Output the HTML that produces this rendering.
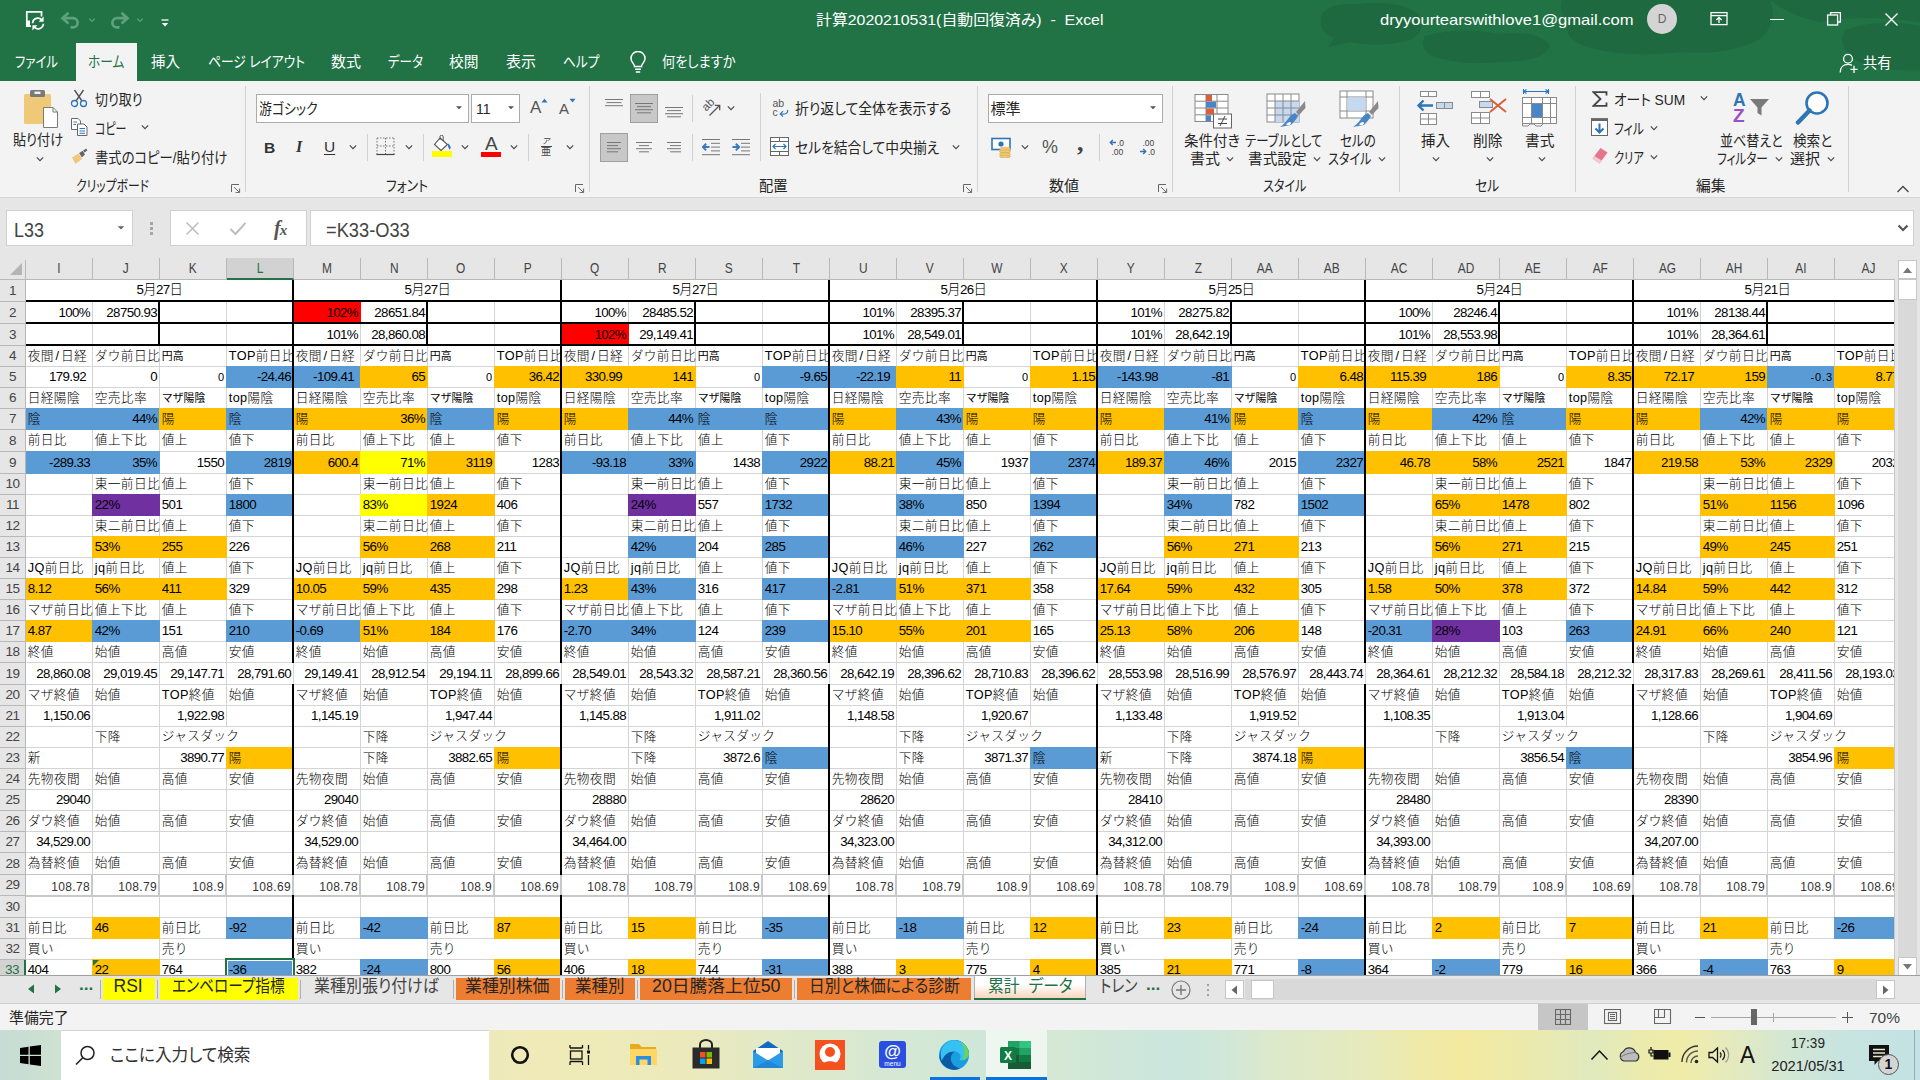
<!DOCTYPE html>
<html lang="ja"><head><meta charset="utf-8"><title>Excel</title>
<style>
html,body{margin:0;padding:0}
body{width:1920px;height:1080px;position:relative;overflow:hidden;background:#fff;font-family:"Liberation Sans","Noto Sans CJK JP",sans-serif;font-feature-settings:"palt"}
.b{position:absolute;display:block}
.t{position:absolute;white-space:nowrap;display:inline-block}
#g{position:absolute;left:0;top:258px;width:1895px;height:718px;overflow:hidden;background:#fff;font-feature-settings:normal}
.c{position:absolute;box-sizing:border-box;overflow:hidden;white-space:nowrap;padding:0 3px 0 2.8px;font-size:12.7px;color:#000;text-align:left;font-weight:300;letter-spacing:.35px}
.r{text-align:right}.m{text-align:center}
.n{font-size:13.3px;letter-spacing:-0.6px}
.s{font-size:10.9px;font-weight:400;letter-spacing:0}
.sn{font-size:11px;letter-spacing:.9px;padding-right:2px}
.g{font-size:12px;color:#333;padding-top:2px}
.ov{overflow:visible;background:#fff;z-index:1}
.o{background:#ffc000}.bl{background:#5b9bd5}.p{background:#7030a0}.y{background:#ffff00}.rd{background:#ff0000}
.vl{position:absolute;top:22px;width:1px;height:696px;background:#d4d4d4}
.hl{position:absolute;left:26px;width:1868px;height:1px;background:#d4d4d4}
.k{position:absolute;background:#000}
.ch{position:absolute;top:0;height:21px;line-height:21px;text-align:center;font-size:14.5px;color:#444;border-right:1px solid #b8b8b8;box-sizing:border-box}
.rh{position:absolute;left:0;width:25px;text-align:center;font-size:13.5px;letter-spacing:-0.4px;color:#444;border-bottom:1px solid #b8b8b8;box-sizing:border-box}
.p6{padding-right:7px}
.sl{padding:0 1.6px}
.ch i{display:inline-block;font-style:normal;transform:scaleX(.82)}

</style></head>
<body>
<div class="b" style="left:0px;top:0px;width:1920px;height:81px;background:#217346;"></div>
<svg class="b" style="left:1300px;top:0px;" width="620" height="81" viewBox="0 0 620 81"><g fill="#1c6139" opacity="0.5">
<path d="M22 14 Q30 2 60 4 Q100 0 118 14 Q128 30 110 40 Q80 48 50 42 L28 47 L34 38 Q16 30 22 14 Z"/>
<path d="M125 36 Q160 26 200 34 Q240 30 250 46 Q244 62 200 62 Q160 66 132 56 Q118 46 125 36 Z"/>
<path d="M262 0 L470 0 Q478 20 462 38 Q430 56 380 52 Q330 58 290 48 Q262 40 268 22 Q258 10 262 0 Z"/>
<path d="M470 0 L620 0 L620 22 Q560 14 520 22 Q490 16 470 0 Z"/>
<path d="M545 30 Q580 18 620 26 L620 70 Q580 72 556 60 Q536 46 545 30 Z"/></g></svg>
<svg class="b" style="left:25px;top:10px;" width="22" height="21" viewBox="0 0 22 21"><g fill="none" stroke="#fff" stroke-width="1.7">
<path d="M16.500 6.500 V1.800 H1.800 V16.200 H6"/>
<path d="M7.600 13.200 A5.300 5.300 0 0 1 17.200 10.400"/><path d="M18.400 13.800 A5.300 5.300 0 0 1 8.800 16.600"/></g>
<rect x="1" y="10.500" width="4" height="6.500" fill="#fff"/>
<path d="M18.600 6.600 V11.800 H13.600 Z M7.400 20.400 V15.200 H12.400 Z" fill="#fff"/></svg>
<svg class="b" style="left:60px;top:11px;" width="22" height="18" viewBox="0 0 22 18"><path d="M8.500 1.800 L2.500 7.200 L8.500 12.600 M3.500 7.200 H13 A4.600 4.600 0 0 1 13 16.400 H10.500" fill="none" stroke="#5fa07d" stroke-width="2.700"/></svg>
<svg class="b" style="left:87px;top:16px;" width="10" height="8" viewBox="0 0 10 8"><path d="M2.2 2.6 L5 5.4 L7.8 2.6" fill="none" stroke="#5fa07d" stroke-width="1.3"/></svg>
<svg class="b" style="left:108px;top:11px;" width="22" height="18" viewBox="0 0 22 18"><path d="M13.500 1.800 L19.500 7.200 L13.500 12.600 M18.500 7.200 H9 A4.600 4.600 0 0 0 9 16.400 H11.500" fill="none" stroke="#5fa07d" stroke-width="2.700"/></svg>
<svg class="b" style="left:135px;top:16px;" width="10" height="8" viewBox="0 0 10 8"><path d="M2.2 2.6 L5 5.4 L7.8 2.6" fill="none" stroke="#5fa07d" stroke-width="1.3"/></svg>
<svg class="b" style="left:160px;top:18.5px;" width="10" height="9" viewBox="0 0 10 9"><path d="M1.5 1 H8.5" stroke="#fff" stroke-width="1.3"/><path d="M1.8 4 H8.2 L5 7.6 Z" fill="#fff"/></svg>
<span class="t" style="left:816px;top:8.5px;font-size:15px;line-height:22px;color:#fff;transform-origin:0 50%;transform:scaleX(1.059);">計算2020210531(自動回復済み)&nbsp; -&nbsp; Excel</span>
<span class="t" style="left:1380px;top:8.5px;font-size:15px;line-height:22px;color:#fff;transform-origin:0 50%;transform:scaleX(1.105);">dryyourtearswithlove1@gmail.com</span>
<div class="b" style="left:1647px;top:4px;width:30px;height:30px;background:#d4d4d4;border-radius:50%"></div>
<span class="t" style="left:1662px;top:10.0px;font-size:12px;line-height:18px;color:#666;transform:translateX(-50%);">D</span>
<svg class="b" style="left:1710px;top:11px;" width="18" height="15" viewBox="0 0 18 15"><g fill="none" stroke="#fff" stroke-width="1.3"><rect x="1" y="1.6" width="16" height="12"/><path d="M1 4.6 H17"/><path d="M9 12 V6.6 M6.4 9 L9 6.4 L11.6 9"/></g></svg>
<div class="b" style="left:1770px;top:19px;width:14px;height:1.4px;background:#fff;"></div>
<svg class="b" style="left:1826px;top:11px;" width="16" height="15" viewBox="0 0 16 15"><g fill="none" stroke="#fff" stroke-width="1.3"><rect x="1.6" y="4" width="10" height="10"/><path d="M4.6 4 V1.6 H14.4 V11 H11.6"/></g></svg>
<svg class="b" style="left:1884px;top:12px;" width="15" height="15" viewBox="0 0 15 15"><path d="M1.5 1.5 L13.5 13.5 M13.5 1.5 L1.5 13.5" stroke="#fff" stroke-width="1.4"/></svg>
<div class="b" style="left:76px;top:43px;width:61px;height:38px;background:#f3f3f3;"></div>
<span class="t" style="left:15px;top:50.5px;font-size:15px;line-height:22px;color:#fff;transform-origin:0 50%;transform:scaleX(0.8269);">ファイル</span>
<span class="t" style="left:87.5px;top:50.5px;font-size:15px;line-height:22px;color:#217346;transform-origin:0 50%;transform:scaleX(0.8488);">ホーム</span>
<span class="t" style="left:151px;top:50.5px;font-size:15px;line-height:22px;color:#fff;transform-origin:0 50%;transform:scaleX(0.9667);">挿入</span>
<span class="t" style="left:207.5px;top:50.5px;font-size:15px;line-height:22px;color:#fff;transform-origin:0 50%;transform:scaleX(0.8509);">ページ レイアウト</span>
<span class="t" style="left:331px;top:50.5px;font-size:15px;line-height:22px;color:#fff;transform-origin:0 50%;transform:scaleX(1);">数式</span>
<span class="t" style="left:387.5px;top:50.5px;font-size:15px;line-height:22px;color:#fff;transform-origin:0 50%;transform:scaleX(0.8333);">データ</span>
<span class="t" style="left:449px;top:50.5px;font-size:15px;line-height:22px;color:#fff;transform-origin:0 50%;transform:scaleX(0.9833);">校閲</span>
<span class="t" style="left:506px;top:50.5px;font-size:15px;line-height:22px;color:#fff;transform-origin:0 50%;transform:scaleX(1);">表示</span>
<span class="t" style="left:562.5px;top:50.5px;font-size:15px;line-height:22px;color:#fff;transform-origin:0 50%;transform:scaleX(0.8488);">ヘルプ</span>
<span class="t" style="left:662px;top:50.5px;font-size:15px;line-height:22px;color:#fff;transform-origin:0 50%;transform:scaleX(0.8795);">何をしますか</span>
<svg class="b" style="left:629px;top:51px;" width="18" height="23" viewBox="0 0 18 23"><g fill="none" stroke="#fff" stroke-width="1.5"><path d="M5.5 15.5 C5.5 12.5 2 11.5 2 7.5 A7 7 0 0 1 16 7.5 C16 11.5 12.5 12.5 12.5 15.5 Z"/><path d="M6 18.3 H12 M6.8 21 H11.2"/></g></svg>
<svg class="b" style="left:1839px;top:53px;" width="20" height="21" viewBox="0 0 20 21"><g fill="none" stroke="#fff" stroke-width="1.3"><circle cx="9" cy="5.8" r="4.4"/><path d="M1.2 19.5 C1.2 14 4.5 11.4 9 11.4 C10.6 11.4 12 11.8 13 12.4"/><path d="M15 12.8 V20 M11.4 16.4 H18.6"/></g></svg>
<span class="t" style="left:1862.5px;top:52.0px;font-size:15px;line-height:22px;color:#fff;transform-origin:0 50%;transform:scaleX(0.95);">共有</span>
<div class="b" style="left:0px;top:81px;width:1920px;height:116px;background:#f3f3f3;"></div>
<svg class="b" style="left:23px;top:89px;" width="36" height="40" viewBox="0 0 36 40"><rect x="1" y="5" width="27" height="30" rx="1.5" fill="#efc878"/>
<rect x="7" y="1" width="15" height="7" rx="1.5" fill="#7a7a7a"/><rect x="11.5" y="2.6" width="6" height="2.4" fill="#f3f3f3"/>
<path d="M20.5 18.5 H30 L34.5 23 V38.5 H20.5 Z" fill="#fff" stroke="#7a7a7a" stroke-width="1"/><path d="M30 18.5 V23 H34.5" fill="none" stroke="#7a7a7a" stroke-width="1"/></svg>
<span class="t" style="left:12.5px;top:129.0px;font-size:15px;line-height:22px;color:#262626;transform-origin:0 50%;transform:scaleX(0.8772);">貼り付け</span>
<svg class="b" style="left:35px;top:155px;" width="10" height="8" viewBox="0 0 10 8"><path d="M1.7999999999999998 2.4 L5 5.6 L8.2 2.4" fill="none" stroke="#444" stroke-width="1.1"/></svg>
<svg class="b" style="left:70px;top:89px;" width="18" height="19" viewBox="0 0 18 19"><path d="M4.5 1 L12 12 M13.5 1 L6 12" stroke="#555" stroke-width="1.4" fill="none"/>
<circle cx="4.5" cy="14.5" r="3" fill="none" stroke="#2e75b6" stroke-width="1.3"/><circle cx="13.5" cy="14.5" r="3" fill="none" stroke="#2e75b6" stroke-width="1.3"/></svg>
<span class="t" style="left:94.5px;top:88.5px;font-size:15px;line-height:22px;color:#262626;transform-origin:0 50%;transform:scaleX(0.8636);">切り取り</span>
<svg class="b" style="left:70px;top:117px;" width="19" height="20" viewBox="0 0 19 20"><path d="M1.5 1.5 H8 L10.5 4 V12.5 H1.5 Z" fill="#fff" stroke="#666" stroke-width="1"/>
<path d="M7.5 7 H14 L17 10 V18.5 H7.5 Z" fill="#fff" stroke="#666" stroke-width="1"/>
<path d="M3.5 5 H7 M3.5 7.5 H6 M9.5 11.5 H15 M9.5 14 H15 M9.5 16.3 H15" stroke="#2e75b6" stroke-width="1"/></svg>
<span class="t" style="left:94.5px;top:117.5px;font-size:15px;line-height:22px;color:#262626;transform-origin:0 50%;transform:scaleX(0.7326);">コピー</span>
<svg class="b" style="left:140px;top:123px;" width="10" height="8" viewBox="0 0 10 8"><path d="M1.7999999999999998 2.4 L5 5.6 L8.2 2.4" fill="none" stroke="#444" stroke-width="1.1"/></svg>
<svg class="b" style="left:71px;top:148px;" width="18" height="18" viewBox="0 0 18 18"><path d="M1 9.5 L7.5 5.5 L11 11 L4.5 16 Z" fill="#efc878"/><path d="M8.2 5 L11.8 2.8 L14 6.4 L10.8 9.6 Z" fill="#666"/><path d="M12.2 2.4 L15.2 0.6 L16.4 2.6 L13.4 4.4 Z" fill="#666"/></svg>
<span class="t" style="left:94.5px;top:146.5px;font-size:15px;line-height:22px;color:#262626;transform-origin:0 50%;transform:scaleX(0.8893);">書式のコピー/貼り付け</span>
<span class="t" style="left:75.5px;top:175.0px;font-size:15px;line-height:22px;color:#262626;transform-origin:0 50%;transform:scaleX(0.7903);">クリップボード</span>
<svg class="b" style="left:231px;top:184px;" width="10" height="9" viewBox="0 0 10 9"><path d="M0.5 8 V0.5 H8" fill="none" stroke="#666" stroke-width="1"/><path d="M3.2 3.2 L8.2 8.2 M8.6 4.6 V8.6 H4.6" fill="none" stroke="#666" stroke-width="1"/></svg>
<div class="b" style="left:245px;top:86px;width:1px;height:106px;background:#d2d2d2;"></div>
<div class="b" style="left:256px;top:94px;width:213px;height:29px;background:#fff;border:1px solid #ababab;box-sizing:border-box;"></div>
<span class="t" style="left:259px;top:98.0px;font-size:15px;line-height:22px;color:#262626;transform-origin:0 50%;transform:scaleX(0.8603);">游ゴシック</span>
<svg class="b" style="left:454px;top:105px;" width="10" height="6" viewBox="0 0 10 6"><path d="M2 1.2 L8 1.2 L5 4.2 Z" fill="#555"/></svg>
<div class="b" style="left:471px;top:94px;width:49px;height:29px;background:#fff;border:1px solid #ababab;box-sizing:border-box;"></div>
<span class="t" style="left:476px;top:98.0px;font-size:15px;line-height:22px;color:#262626;transform-origin:0 50%;transform:scaleX(0.9375);">11</span>
<svg class="b" style="left:506px;top:105px;" width="10" height="6" viewBox="0 0 10 6"><path d="M2 1.2 L8 1.2 L5 4.2 Z" fill="#555"/></svg>
<span class="t" style="left:530px;top:95.0px;font-size:17px;line-height:26px;color:#555;">A</span>
<svg class="b" style="left:541px;top:98px;" width="7" height="5" viewBox="0 0 7 5"><path d="M0.5 4.5 L3.5 0.8 L6.5 4.5 Z" fill="#2e75b6"/></svg>
<span class="t" style="left:559px;top:98.0px;font-size:15px;line-height:22px;color:#555;">A</span>
<svg class="b" style="left:569px;top:98px;" width="7" height="5" viewBox="0 0 7 5"><path d="M0.5 0.8 L3.5 4.5 L6.5 0.8 Z" fill="#2e75b6"/></svg>
<span class="t" style="left:264px;top:135.5px;font-size:15.5px;line-height:23px;color:#333;font-weight:bold;">B</span>
<span class="t" style="left:296px;top:135.0px;font-size:16px;line-height:24px;color:#333;font-family:'Liberation Serif',serif;font-style:italic;font-weight:bold">I</span>
<span class="t" style="left:324px;top:135.0px;font-size:15.5px;line-height:23px;color:#333;text-decoration:underline;text-underline-offset:2px">U</span>
<svg class="b" style="left:348px;top:143px;" width="10" height="8" viewBox="0 0 10 8"><path d="M1.7999999999999998 2.4 L5 5.6 L8.2 2.4" fill="none" stroke="#444" stroke-width="1.1"/></svg>
<div class="b" style="left:367px;top:134px;width:1px;height:27px;background:#d2d2d2;"></div>
<svg class="b" style="left:376px;top:137px;" width="20" height="19" viewBox="0 0 20 19"><g stroke="#777" stroke-width="1" stroke-dasharray="1.5 1.5" fill="none"><path d="M1 1 H18 M1 9 H18 M1 1 V18 M9.5 1 V18 M18 1 V18"/></g><path d="M0.5 17.5 H18.5" stroke="#444" stroke-width="1.2"/></svg>
<svg class="b" style="left:404px;top:143px;" width="10" height="8" viewBox="0 0 10 8"><path d="M1.7999999999999998 2.4 L5 5.6 L8.2 2.4" fill="none" stroke="#444" stroke-width="1.1"/></svg>
<div class="b" style="left:423px;top:134px;width:1px;height:27px;background:#d2d2d2;"></div>
<svg class="b" style="left:432px;top:135px;" width="21" height="17" viewBox="0 0 21 17"><path d="M8 3 L15.5 9.5 L9 15.5 L2.5 9.5 Z" fill="#fff" stroke="#555" stroke-width="1.1"/><path d="M8 5 V1.8 A1.6 1.6 0 0 1 11.2 1.8 V6" fill="none" stroke="#555" stroke-width="1"/><path d="M16 8.5 C18.5 10.5 19.5 13 17.8 14.5 C16 13 15.8 10.5 16 8.5 Z" fill="#2e75b6"/></svg>
<div class="b" style="left:432px;top:151px;width:20px;height:6px;background:#ffff00;"></div>
<svg class="b" style="left:460px;top:143px;" width="10" height="8" viewBox="0 0 10 8"><path d="M1.7999999999999998 2.4 L5 5.6 L8.2 2.4" fill="none" stroke="#444" stroke-width="1.1"/></svg>
<span class="t" style="left:484.5px;top:131.0px;font-size:17.5px;line-height:26px;color:#444;transform-origin:0 50%;transform:scaleX(1.083);">A</span>
<div class="b" style="left:481px;top:152px;width:20px;height:5px;background:#ff0000;"></div>
<svg class="b" style="left:509px;top:143px;" width="10" height="8" viewBox="0 0 10 8"><path d="M1.7999999999999998 2.4 L5 5.6 L8.2 2.4" fill="none" stroke="#444" stroke-width="1.1"/></svg>
<div class="b" style="left:528px;top:134px;width:1px;height:27px;background:#d2d2d2;"></div>
<span class="t" style="left:542px;top:135.5px;font-size:8px;line-height:12px;color:#444;font-style:italic">ア</span>
<span class="t" style="left:541px;top:143.5px;font-size:10px;line-height:15px;color:#444;">亜</span>
<div class="b" style="left:541px;top:146px;width:11px;height:1px;background:#444;"></div>
<svg class="b" style="left:565px;top:143px;" width="10" height="8" viewBox="0 0 10 8"><path d="M1.7999999999999998 2.4 L5 5.6 L8.2 2.4" fill="none" stroke="#444" stroke-width="1.1"/></svg>
<span class="t" style="left:386px;top:175.0px;font-size:15px;line-height:22px;color:#262626;transform-origin:0 50%;transform:scaleX(0.8571);">フォント</span>
<svg class="b" style="left:575px;top:184px;" width="10" height="9" viewBox="0 0 10 9"><path d="M0.5 8 V0.5 H8" fill="none" stroke="#666" stroke-width="1"/><path d="M3.2 3.2 L8.2 8.2 M8.6 4.6 V8.6 H4.6" fill="none" stroke="#666" stroke-width="1"/></svg>
<div class="b" style="left:589px;top:86px;width:1px;height:106px;background:#d2d2d2;"></div>
<svg class="b" style="left:605px;top:98.7px;" width="18" height="10" viewBox="0 0 18 10"><rect x="0.0" y="0.00" width="18" height="1" fill="#777"/><rect x="1.5" y="3.10" width="15" height="1" fill="#777"/><rect x="0.0" y="6.20" width="18" height="1" fill="#777"/></svg>
<div class="b" style="left:630px;top:94px;width:28px;height:29px;background:#c8c8c8;border:1px solid #9f9f9f;box-sizing:border-box;"></div>
<svg class="b" style="left:635px;top:102.5px;" width="18" height="13" viewBox="0 0 18 13"><rect x="0.0" y="0.00" width="18" height="1" fill="#777"/><rect x="2.0" y="3.10" width="14" height="1" fill="#777"/><rect x="0.0" y="6.20" width="18" height="1" fill="#777"/><rect x="2.0" y="9.30" width="14" height="1" fill="#777"/></svg>
<svg class="b" style="left:665px;top:107px;" width="18" height="13" viewBox="0 0 18 13"><rect x="0.0" y="0.00" width="18" height="1" fill="#777"/><rect x="2.0" y="3.10" width="14" height="1" fill="#777"/><rect x="0.0" y="6.20" width="18" height="1" fill="#777"/><rect x="2.0" y="9.30" width="14" height="1" fill="#777"/></svg>
<div class="b" style="left:692px;top:95px;width:1px;height:27px;background:#d2d2d2;"></div>
<svg class="b" style="left:699px;top:96px;" width="23" height="22" viewBox="0 0 23 22"><text x="0" y="0" font-size="11.500" fill="#555" transform="translate(7.300 15.800) rotate(-45)" font-family="Liberation Sans">ab</text><path d="M10.500 19.500 L20.500 9.500 M15.800 9.300 H20.700 V14.200" fill="none" stroke="#555" stroke-width="1.300"/></svg>
<svg class="b" style="left:726px;top:104px;" width="10" height="8" viewBox="0 0 10 8"><path d="M1.7999999999999998 2.4 L5 5.6 L8.2 2.4" fill="none" stroke="#444" stroke-width="1.1"/></svg>
<div class="b" style="left:760px;top:93px;width:1px;height:68px;background:#d2d2d2;"></div>
<svg class="b" style="left:772px;top:98px;" width="18" height="20" viewBox="0 0 18 20"><text x="0.500" y="9" font-size="10.500" fill="#555" font-family="Liberation Sans">ab</text><text x="0.500" y="18" font-size="10.500" fill="#555" font-family="Liberation Sans">c</text><path d="M15.500 12 C16.500 15.500 13 16.500 8.500 16 M11 13.200 L8.200 16 L11 18.600" fill="none" stroke="#3a7abf" stroke-width="1.200"/></svg>
<span class="t" style="left:794.5px;top:98.0px;font-size:15px;line-height:22px;color:#262626;transform-origin:0 50%;transform:scaleX(0.9231);">折り返して全体を表示する</span>
<div class="b" style="left:600px;top:133px;width:28px;height:29px;background:#c8c8c8;border:1px solid #9f9f9f;box-sizing:border-box;"></div>
<svg class="b" style="left:607px;top:141.7px;" width="14" height="13" viewBox="0 0 14 13"><rect x="0" y="0.00" width="14" height="1" fill="#777"/><rect x="0" y="3.10" width="11" height="1" fill="#777"/><rect x="0" y="6.20" width="14" height="1" fill="#777"/><rect x="0" y="9.30" width="11" height="1" fill="#777"/></svg>
<svg class="b" style="left:636px;top:141.7px;" width="16" height="13" viewBox="0 0 16 13"><rect x="0.0" y="0.00" width="16" height="1" fill="#777"/><rect x="3.0" y="3.10" width="10" height="1" fill="#777"/><rect x="0.0" y="6.20" width="16" height="1" fill="#777"/><rect x="3.0" y="9.30" width="10" height="1" fill="#777"/></svg>
<svg class="b" style="left:667px;top:141.7px;" width="14" height="13" viewBox="0 0 14 13"><rect x="0" y="0.00" width="14" height="1" fill="#777"/><rect x="3" y="3.10" width="11" height="1" fill="#777"/><rect x="0" y="6.20" width="14" height="1" fill="#777"/><rect x="3" y="9.30" width="11" height="1" fill="#777"/></svg>
<div class="b" style="left:692px;top:134px;width:1px;height:27px;background:#d2d2d2;"></div>
<svg class="b" style="left:702px;top:138.7px;" width="19" height="17" viewBox="0 0 19 17"><path d="M0 0.5 H18 M9 4.300 H18 M9 8.100 H18 M9 11.900 H18 M0 15.700 H18" stroke="#777" stroke-width="1"/><path d="M7.500 8.100 H1 M4.200 4.800 L0.900 8.100 L4.200 11.400" fill="none" stroke="#3a7abf" stroke-width="2"/></svg>
<svg class="b" style="left:732px;top:138.7px;" width="19" height="17" viewBox="0 0 19 17"><path d="M0 0.5 H18 M9 4.300 H18 M9 8.100 H18 M9 11.900 H18 M0 15.700 H18" stroke="#777" stroke-width="1"/><path d="M0.500 8.100 H7 M3.800 4.800 L7.100 8.100 L3.800 11.400" fill="none" stroke="#3a7abf" stroke-width="2"/></svg>
<svg class="b" style="left:770px;top:137px;" width="19" height="19" viewBox="0 0 19 19"><g fill="#fff" stroke="#666" stroke-width="1"><rect x="0.5" y="0.5" width="18" height="18"/><path d="M0.5 4.5 H18.5 M0.5 14.5 H18.5 M9.500 0.5 V4.5 M9.500 14.5 V18.5"/></g><path d="M3 9.5 H16 M5.5 7 L3 9.5 L5.5 12 M13.5 7 L16 9.5 L13.5 12" fill="none" stroke="#2e75b6" stroke-width="1.2"/></svg>
<span class="t" style="left:794.5px;top:137.0px;font-size:15px;line-height:22px;color:#262626;transform-origin:0 50%;transform:scaleX(0.9204);">セルを結合して中央揃え</span>
<svg class="b" style="left:951px;top:143px;" width="10" height="8" viewBox="0 0 10 8"><path d="M1.7999999999999998 2.4 L5 5.6 L8.2 2.4" fill="none" stroke="#444" stroke-width="1.1"/></svg>
<span class="t" style="left:759px;top:175.0px;font-size:15px;line-height:22px;color:#262626;transform-origin:0 50%;transform:scaleX(0.95);">配置</span>
<svg class="b" style="left:963px;top:184px;" width="10" height="9" viewBox="0 0 10 9"><path d="M0.5 8 V0.5 H8" fill="none" stroke="#666" stroke-width="1"/><path d="M3.2 3.2 L8.2 8.2 M8.6 4.6 V8.6 H4.6" fill="none" stroke="#666" stroke-width="1"/></svg>
<div class="b" style="left:977px;top:86px;width:1px;height:106px;background:#d2d2d2;"></div>
<div class="b" style="left:988px;top:94px;width:175px;height:29px;background:#fff;border:1px solid #ababab;box-sizing:border-box;"></div>
<span class="t" style="left:990.5px;top:98.0px;font-size:15px;line-height:22px;color:#262626;transform-origin:0 50%;transform:scaleX(1);">標準</span>
<svg class="b" style="left:1148px;top:105px;" width="10" height="6" viewBox="0 0 10 6"><path d="M2 1.2 L8 1.2 L5 4.2 Z" fill="#555"/></svg>
<svg class="b" style="left:991px;top:137px;" width="22" height="21" viewBox="0 0 22 21"><rect x="1" y="1.5" width="18" height="11" fill="#fff" stroke="#2e75b6" stroke-width="1.6"/><circle cx="10" cy="7" r="2.6" fill="#2e75b6"/>
<g fill="#efc878" stroke="#d9a441" stroke-width="0.6"><ellipse cx="14" cy="12" rx="5.5" ry="1.8"/><ellipse cx="14" cy="14.6" rx="5.5" ry="1.8"/><ellipse cx="14" cy="17.2" rx="5.5" ry="1.8"/><ellipse cx="14" cy="19.4" rx="5.5" ry="1.4"/></g></svg>
<svg class="b" style="left:1020px;top:143px;" width="10" height="8" viewBox="0 0 10 8"><path d="M1.7999999999999998 2.4 L5 5.6 L8.2 2.4" fill="none" stroke="#444" stroke-width="1.1"/></svg>
<span class="t" style="left:1042px;top:133.0px;font-size:19px;line-height:28px;color:#555;transform-origin:0 50%;transform:scaleX(0.9412);">%</span>
<span class="t" style="left:1077px;top:122.5px;font-size:26px;line-height:39px;color:#444;font-family:'Liberation Serif',serif;font-weight:bold">,</span>
<div class="b" style="left:1099px;top:134px;width:1px;height:27px;background:#d2d2d2;"></div>
<svg class="b" style="left:1109px;top:138px;" width="18" height="19" viewBox="0 0 18 19"><text x="8" y="7.5" font-size="8.5" fill="#444" font-family="Liberation Sans">.0</text><text x="2.5" y="17" font-size="8.5" fill="#444" font-family="Liberation Sans">.00</text><path d="M7 4.5 H1.5 M3.8 2 L1.3 4.5 L3.8 7" fill="none" stroke="#2e75b6" stroke-width="1.4"/></svg>
<svg class="b" style="left:1139px;top:138px;" width="18" height="19" viewBox="0 0 18 19"><text x="3.5" y="7.5" font-size="8.5" fill="#444" font-family="Liberation Sans">.00</text><text x="9" y="17" font-size="8.5" fill="#444" font-family="Liberation Sans">.0</text><path d="M1 13.5 H6.5 M4.2 11 L6.7 13.5 L4.2 16" fill="none" stroke="#2e75b6" stroke-width="1.4"/></svg>
<span class="t" style="left:1049px;top:175.0px;font-size:15px;line-height:22px;color:#262626;transform-origin:0 50%;transform:scaleX(1);">数値</span>
<svg class="b" style="left:1158px;top:184px;" width="10" height="9" viewBox="0 0 10 9"><path d="M0.5 8 V0.5 H8" fill="none" stroke="#666" stroke-width="1"/><path d="M3.2 3.2 L8.2 8.2 M8.6 4.6 V8.6 H4.6" fill="none" stroke="#666" stroke-width="1"/></svg>
<div class="b" style="left:1172px;top:86px;width:1px;height:106px;background:#d2d2d2;"></div>
<svg class="b" style="left:1194px;top:93px;" width="40" height="36" viewBox="0 0 40 36"><rect x="1" y="1.5" width="33" height="27" fill="#fff" stroke="#8a8a8a" stroke-width="1"/><path d="M1 8.2 H34 M1 15 H34 M1 21.8 H34 M12 1.5 V28.5 M23 1.5 V28.5" stroke="#8a8a8a" stroke-width="1"/>
<rect x="12" y="2" width="6" height="6" fill="#d9603b"/><rect x="12" y="8.7" width="10" height="6" fill="#4a86c5"/><rect x="12" y="15.5" width="8" height="6" fill="#d9603b"/><rect x="12" y="22.3" width="5" height="6" fill="#4a86c5"/>
<rect x="19.5" y="21" width="18" height="14" fill="#fff" stroke="#666" stroke-width="1"/><path d="M24 30.5 H33 M24 26 H33 M31 23 L26 33" stroke="#444" stroke-width="1"/></svg>
<span class="t" style="left:1184px;top:129.5px;font-size:15px;line-height:22px;color:#262626;transform-origin:0 50%;transform:scaleX(0.9655);">条件付き</span>
<span class="t" style="left:1190px;top:148.0px;font-size:15px;line-height:22px;color:#262626;transform-origin:0 50%;transform:scaleX(1);">書式</span>
<svg class="b" style="left:1225px;top:155px;" width="10" height="8" viewBox="0 0 10 8"><path d="M1.7999999999999998 2.4 L5 5.6 L8.2 2.4" fill="none" stroke="#444" stroke-width="1.1"/></svg>
<svg class="b" style="left:1266px;top:93px;" width="34" height="32" viewBox="0 0 34 32"><rect x="1" y="1" width="32" height="28" fill="#fff" stroke="#8a8a8a"/><rect x="9" y="8" width="24" height="21" fill="#c5d9f1"/><path d="M1 8 H33 M1 15 H33 M1 22 H33 M9 1 V29 M17 1 V29 M25 1 V29" stroke="#8a8a8a" stroke-width="1"/></svg>
<svg class="b" style="left:1278px;top:100px;" width="28" height="28" viewBox="0 0 28 28"><path d="M27 1 L18 12 L21 15 L27.5 8 Z" fill="#8a8a8a"/><path d="M17 13 L20 16 C18 20 15 23 13 25 L2 27 C6 24 8 22 10 19 C12 16 14 14 17 13 Z" fill="#4a86c5"/><path d="M8 24.5 C10 22 12.5 21 13 23.5 C12 25.5 10 25.8 8 24.5 Z" fill="#fff"/></svg>
<span class="t" style="left:1245px;top:129.5px;font-size:15px;line-height:22px;color:#262626;transform-origin:0 50%;transform:scaleX(0.8245);">テーブルとして</span>
<span class="t" style="left:1247.5px;top:148.0px;font-size:15px;line-height:22px;color:#262626;transform-origin:0 50%;transform:scaleX(0.975);">書式設定</span>
<svg class="b" style="left:1312px;top:155px;" width="10" height="8" viewBox="0 0 10 8"><path d="M1.7999999999999998 2.4 L5 5.6 L8.2 2.4" fill="none" stroke="#444" stroke-width="1.1"/></svg>
<svg class="b" style="left:1339px;top:90px;" width="36" height="32" viewBox="0 0 36 32"><rect x="1" y="1" width="33" height="27" fill="#fff" stroke="#8a8a8a"/><path d="M1 7 H34 M1 21 H34 M8 1 V28 M27 1 V28" stroke="#8a8a8a" stroke-width="1"/><rect x="8.500" y="7.5" width="18" height="13" fill="#c5d9f1"/></svg>
<svg class="b" style="left:1351px;top:100px;" width="28" height="28" viewBox="0 0 28 28"><path d="M27 1 L18 12 L21 15 L27.5 8 Z" fill="#8a8a8a"/><path d="M17 13 L20 16 C18 20 15 23 13 25 L2 27 C6 24 8 22 10 19 C12 16 14 14 17 13 Z" fill="#4a86c5"/><path d="M8 24.5 C10 22 12.5 21 13 23.5 C12 25.5 10 25.8 8 24.5 Z" fill="#fff"/></svg>
<span class="t" style="left:1340px;top:129.5px;font-size:15px;line-height:22px;color:#262626;transform-origin:0 50%;transform:scaleX(0.8372);">セルの</span>
<span class="t" style="left:1327.5px;top:148.0px;font-size:15px;line-height:22px;color:#262626;transform-origin:0 50%;transform:scaleX(0.8056);">スタイル</span>
<svg class="b" style="left:1377px;top:155px;" width="10" height="8" viewBox="0 0 10 8"><path d="M1.7999999999999998 2.4 L5 5.6 L8.2 2.4" fill="none" stroke="#444" stroke-width="1.1"/></svg>
<span class="t" style="left:1262.5px;top:175.0px;font-size:15px;line-height:22px;color:#262626;transform-origin:0 50%;transform:scaleX(0.8056);">スタイル</span>
<div class="b" style="left:1399px;top:86px;width:1px;height:106px;background:#d2d2d2;"></div>
<svg class="b" style="left:1416px;top:91px;" width="38" height="35" viewBox="0 0 38 35"><g fill="#fff" stroke="#8a8a8a" stroke-width="1"><rect x="4.500" y="0.5" width="16" height="5"/><rect x="4.5" y="22.5" width="16" height="11"/><path d="M4.5 28 H20.5 M12.5 22.5 V33.5 M12.5 .5 V5.5"/></g>
<rect x="20.500" y="11.5" width="16" height="6" fill="#c5d9f1" stroke="#8a8a8a"/><path d="M28.5 11.5 V17.5" stroke="#8a8a8a"/>
<path d="M17 14.500 H2.5 M7.5 9.5 L2.5 14.5 L7.5 19.5" fill="none" stroke="#2e75b6" stroke-width="2.4"/></svg>
<span class="t" style="left:1421px;top:129.5px;font-size:15px;line-height:22px;color:#262626;transform-origin:0 50%;transform:scaleX(0.9667);">挿入</span>
<svg class="b" style="left:1431px;top:155px;" width="10" height="8" viewBox="0 0 10 8"><path d="M1.7999999999999998 2.4 L5 5.6 L8.2 2.4" fill="none" stroke="#444" stroke-width="1.1"/></svg>
<svg class="b" style="left:1471px;top:91px;" width="38" height="35" viewBox="0 0 38 35"><g fill="#fff" stroke="#8a8a8a" stroke-width="1"><rect x="0.500" y="0.5" width="18" height="6"/><rect x="0.5" y="21.5" width="18" height="11"/><path d="M0.5 27 H18.5 M9.5 21.5 V32.500 M9.5 .5 V6.5"/></g>
<rect x="8.500" y="10.5" width="13" height="6" fill="#c5d9f1" stroke="#8a8a8a"/>
<path d="M19 8 L35 21 M35 8 L19 21" stroke="#d9603b" stroke-width="2"/></svg>
<span class="t" style="left:1473px;top:129.5px;font-size:15px;line-height:22px;color:#262626;transform-origin:0 50%;transform:scaleX(0.9833);">削除</span>
<svg class="b" style="left:1485px;top:155px;" width="10" height="8" viewBox="0 0 10 8"><path d="M1.7999999999999998 2.4 L5 5.6 L8.2 2.4" fill="none" stroke="#444" stroke-width="1.1"/></svg>
<svg class="b" style="left:1522px;top:89px;" width="36" height="38" viewBox="0 0 36 38"><path d="M1.5 2.500 H26.5 M1.5 0 V5 M26.500 0 V5 M4.5 0.5 L1.5 2.500 L4.5 4.5 M23.5 .5 L26.5 2.5 L23.500 4.500" fill="none" stroke="#2e75b6" stroke-width="1.1"/>
<rect x="0.500" y="8.5" width="34" height="26" fill="#fff" stroke="#8a8a8a"/><path d="M.5 14.500 H34.5 M.5 28.5 H34.5 M9.5 8.5 V34.500 M20.5 8.5 V34.5 M28.5 8.5 V34.5" stroke="#8a8a8a"/><rect x="10" y="15" width="10" height="13" fill="#4a86c5"/>
<path d="M0.5 34.5 V37 L6 37 L8 35 H12 L14 37 H19 L21 35" fill="none" stroke="#8a8a8a"/></svg>
<span class="t" style="left:1525px;top:129.5px;font-size:15px;line-height:22px;color:#262626;transform-origin:0 50%;transform:scaleX(0.9833);">書式</span>
<svg class="b" style="left:1537px;top:155px;" width="10" height="8" viewBox="0 0 10 8"><path d="M1.7999999999999998 2.4 L5 5.6 L8.2 2.4" fill="none" stroke="#444" stroke-width="1.1"/></svg>
<span class="t" style="left:1475px;top:175.0px;font-size:15px;line-height:22px;color:#262626;transform-origin:0 50%;transform:scaleX(0.8571);">セル</span>
<div class="b" style="left:1575px;top:86px;width:1px;height:106px;background:#d2d2d2;"></div>
<svg class="b" style="left:1592px;top:91px;" width="16" height="16" viewBox="0 0 16 16"><path d="M14.500 4.500 V1.2 H1.500 L8.5 8 L1.5 14.800 H14.5 V11.5" fill="none" stroke="#444" stroke-width="1.8"/></svg>
<span class="t" style="left:1614px;top:88.5px;font-size:15px;line-height:22px;color:#262626;transform-origin:0 50%;transform:scaleX(0.9167);">オート SUM</span>
<svg class="b" style="left:1699px;top:94px;" width="10" height="8" viewBox="0 0 10 8"><path d="M1.7999999999999998 2.4 L5 5.6 L8.2 2.4" fill="none" stroke="#444" stroke-width="1.1"/></svg>
<svg class="b" style="left:1591px;top:118px;" width="18" height="18" viewBox="0 0 18 18"><rect x="0.5" y="2.5" width="16" height="15" fill="#fff" stroke="#666"/><path d="M0 1.2 H17" stroke="#666" stroke-width="2.200"/><path d="M8.5 5.500 V14 M4.500 10.500 L8.500 14.500 L12.5 10.5" fill="none" stroke="#2e75b6" stroke-width="2"/></svg>
<span class="t" style="left:1614px;top:117.5px;font-size:15px;line-height:22px;color:#262626;transform-origin:0 50%;transform:scaleX(0.7895);">フィル</span>
<svg class="b" style="left:1649px;top:124px;" width="10" height="8" viewBox="0 0 10 8"><path d="M1.7999999999999998 2.4 L5 5.6 L8.2 2.4" fill="none" stroke="#444" stroke-width="1.1"/></svg>
<svg class="b" style="left:1591px;top:147px;" width="18" height="18" viewBox="0 0 18 18"><path d="M9.500 1 L16.500 5.500 L8.500 16.500 L1.5 11.500 Z" fill="#e8748c"/><path d="M3.500 9 L1.5 11.5 L8.500 16.5 L10.5 13.500 Z" fill="#f7c9d2"/></svg>
<span class="t" style="left:1614px;top:146.5px;font-size:15px;line-height:22px;color:#262626;transform-origin:0 50%;transform:scaleX(0.75);">クリア</span>
<svg class="b" style="left:1649px;top:153px;" width="10" height="8" viewBox="0 0 10 8"><path d="M1.7999999999999998 2.4 L5 5.6 L8.2 2.4" fill="none" stroke="#444" stroke-width="1.1"/></svg>
<span class="t" style="left:1733px;top:87.0px;font-size:17.5px;line-height:26px;color:#2e75b6;font-weight:bold;transform-origin:0 50%;transform:scaleX(1);">A</span>
<span class="t" style="left:1733px;top:103.0px;font-size:17.5px;line-height:26px;color:#9b4fc4;font-weight:bold;transform-origin:0 50%;transform:scaleX(1.091);">Z</span>
<svg class="b" style="left:1749px;top:98px;" width="21" height="19" viewBox="0 0 21 19"><path d="M1 1 H20 L12.500 9.500 V17.500 L8.500 15 V9.500 Z" fill="#7a7a7a"/></svg>
<span class="t" style="left:1719.5px;top:129.5px;font-size:15px;line-height:22px;color:#262626;transform-origin:0 50%;transform:scaleX(0.8681);">並べ替えと</span>
<span class="t" style="left:1717px;top:148.0px;font-size:15px;line-height:22px;color:#262626;transform-origin:0 50%;transform:scaleX(0.7727);">フィルター</span>
<svg class="b" style="left:1774px;top:155px;" width="10" height="8" viewBox="0 0 10 8"><path d="M1.7999999999999998 2.4 L5 5.6 L8.2 2.4" fill="none" stroke="#444" stroke-width="1.1"/></svg>
<svg class="b" style="left:1795px;top:90px;" width="36" height="36" viewBox="0 0 36 36"><circle cx="22" cy="13" r="10.500" fill="#fff" stroke="#2e75b6" stroke-width="2.600"/><path d="M14.500 20.500 L3 32.500" stroke="#2e75b6" stroke-width="4.500" stroke-linecap="round"/></svg>
<span class="t" style="left:1793px;top:129.5px;font-size:15px;line-height:22px;color:#262626;transform-origin:0 50%;transform:scaleX(0.907);">検索と</span>
<span class="t" style="left:1790px;top:148.0px;font-size:15px;line-height:22px;color:#262626;transform-origin:0 50%;transform:scaleX(1);">選択</span>
<svg class="b" style="left:1826px;top:155px;" width="10" height="8" viewBox="0 0 10 8"><path d="M1.7999999999999998 2.4 L5 5.6 L8.2 2.4" fill="none" stroke="#444" stroke-width="1.1"/></svg>
<span class="t" style="left:1695.5px;top:175.0px;font-size:15px;line-height:22px;color:#262626;transform-origin:0 50%;transform:scaleX(0.9833);">編集</span>
<div class="b" style="left:1848px;top:86px;width:1px;height:106px;background:#d2d2d2;"></div>
<svg class="b" style="left:1896px;top:184px;" width="14" height="10" viewBox="0 0 14 10"><path d="M1.5 8 L7 2.500 L12.500 8" fill="none" stroke="#444" stroke-width="1.300"/></svg>
<div class="b" style="left:0px;top:197px;width:1920px;height:1px;background:#d6d6d6;"></div>
<div class="b" style="left:0px;top:198px;width:1920px;height:60px;background:#e6e6e6;"></div>
<div class="b" style="left:6px;top:210px;width:127px;height:36px;background:#fff;border:1px solid #d0d0d0;box-sizing:border-box;"></div>
<span class="t" style="left:14px;top:215.0px;font-size:20px;line-height:30px;color:#444;transform-origin:0 50%;transform:scaleX(0.8939);">L33</span>
<svg class="b" style="left:116px;top:225px;" width="10" height="6" viewBox="0 0 10 6"><path d="M1.6 1.2 L8.4 1.2 L5 4.6 Z" fill="#666"/></svg>
<div class="b" style="left:150px;top:221.5px;width:3px;height:3px;background:#a6a6a6;"></div>
<div class="b" style="left:150px;top:226.5px;width:3px;height:3px;background:#a6a6a6;"></div>
<div class="b" style="left:150px;top:231.5px;width:3px;height:3px;background:#a6a6a6;"></div>
<div class="b" style="left:170px;top:210px;width:137px;height:36px;background:#fff;border:1px solid #d0d0d0;box-sizing:border-box;"></div>
<svg class="b" style="left:185px;top:221px;" width="15" height="15" viewBox="0 0 15 15"><path d="M1.5 1.5 L13.5 13.5 M13.5 1.5 L1.5 13.5" stroke="#bdbdbd" stroke-width="1.5"/></svg>
<svg class="b" style="left:229px;top:221px;" width="18" height="15" viewBox="0 0 18 15"><path d="M1.5 8 L6.5 13 L16.5 1.8" stroke="#bdbdbd" stroke-width="2" fill="none"/></svg>
<span class="t" style="left:274px;top:213.0px;font-size:20px;line-height:30px;color:#555;font-family:'Liberation Serif',serif;font-weight:bold;letter-spacing:-1px"><i>f</i><i style="font-size:15px">x</i></span>
<div class="b" style="left:310px;top:210px;width:1604px;height:36px;background:#fff;border:1px solid #d0d0d0;box-sizing:border-box;"></div>
<span class="t" style="left:326px;top:214.5px;font-size:20px;line-height:30px;color:#444;transform-origin:0 50%;transform:scaleX(0.913);">=K33-O33</span>
<svg class="b" style="left:1896px;top:222px;" width="14" height="12" viewBox="0 0 14 12"><path d="M2.5 3.5 L7 8 L11.5 3.5" stroke="#555" stroke-width="2.2" fill="none"/></svg>
<div id="g"><div class="b" style="left:0;top:0;width:1895px;height:22px;background:#e6e6e6"></div>
<div class="b" style="left:0;top:21px;width:1895px;height:1px;background:#b8b8b8"></div>
<div class="b" style="left:0;top:22px;width:26px;height:696px;background:#e6e6e6"></div>
<div class="b" style="left:25px;top:2px;width:1px;height:716px;background:#b8b8b8"></div>
<svg class="b" style="left:8px;top:3px" width="16" height="16"><path d="M14 2 L14 14 L2 14 Z" fill="#b4b4b4"/></svg>
<div class="ch" style="left:26px;width:67px"><i>I</i></div>
<div class="ch" style="left:93px;width:67px"><i>J</i></div>
<div class="ch" style="left:160px;width:67px"><i>K</i></div>
<div class="ch" style="left:227px;width:67px;background:#d2d2d2;color:#217346;border-bottom:2px solid #217346;height:22px"><i>L</i></div>
<div class="ch" style="left:294px;width:67px"><i>M</i></div>
<div class="ch" style="left:361px;width:67px"><i>N</i></div>
<div class="ch" style="left:428px;width:67px"><i>O</i></div>
<div class="ch" style="left:495px;width:67px"><i>P</i></div>
<div class="ch" style="left:562px;width:67px"><i>Q</i></div>
<div class="ch" style="left:629px;width:67px"><i>R</i></div>
<div class="ch" style="left:696px;width:67px"><i>S</i></div>
<div class="ch" style="left:763px;width:67px"><i>T</i></div>
<div class="ch" style="left:830px;width:67px"><i>U</i></div>
<div class="ch" style="left:897px;width:67px"><i>V</i></div>
<div class="ch" style="left:964px;width:67px"><i>W</i></div>
<div class="ch" style="left:1031px;width:67px"><i>X</i></div>
<div class="ch" style="left:1098px;width:67px"><i>Y</i></div>
<div class="ch" style="left:1165px;width:67px"><i>Z</i></div>
<div class="ch" style="left:1232px;width:67px"><i>AA</i></div>
<div class="ch" style="left:1299px;width:67px"><i>AB</i></div>
<div class="ch" style="left:1366px;width:67px"><i>AC</i></div>
<div class="ch" style="left:1433px;width:67px"><i>AD</i></div>
<div class="ch" style="left:1500px;width:67px"><i>AE</i></div>
<div class="ch" style="left:1567px;width:67px"><i>AF</i></div>
<div class="ch" style="left:1634px;width:67px"><i>AG</i></div>
<div class="ch" style="left:1701px;width:67px"><i>AH</i></div>
<div class="ch" style="left:1768px;width:67px"><i>AI</i></div>
<div class="ch" style="left:1835px;width:67px"><i>AJ</i></div>
<div class="rh" style="top:22px;height:22px;line-height:21px;">1</div>
<div class="rh" style="top:44px;height:22px;line-height:21px;">2</div>
<div class="rh" style="top:66px;height:22px;line-height:21px;">3</div>
<div class="rh" style="top:88px;height:21px;line-height:20px;">4</div>
<div class="rh" style="top:109px;height:21px;line-height:20px;">5</div>
<div class="rh" style="top:130px;height:21px;line-height:20px;">6</div>
<div class="rh" style="top:151px;height:21px;line-height:20px;">7</div>
<div class="rh" style="top:172px;height:22px;line-height:21px;">8</div>
<div class="rh" style="top:194px;height:22px;line-height:21px;">9</div>
<div class="rh" style="top:216px;height:21px;line-height:20px;">10</div>
<div class="rh" style="top:237px;height:21px;line-height:20px;">11</div>
<div class="rh" style="top:258px;height:21px;line-height:20px;">12</div>
<div class="rh" style="top:279px;height:21px;line-height:20px;">13</div>
<div class="rh" style="top:300px;height:21px;line-height:20px;">14</div>
<div class="rh" style="top:321px;height:21px;line-height:20px;">15</div>
<div class="rh" style="top:342px;height:21px;line-height:20px;">16</div>
<div class="rh" style="top:363px;height:21px;line-height:20px;">17</div>
<div class="rh" style="top:384px;height:21px;line-height:20px;">18</div>
<div class="rh" style="top:405px;height:22px;line-height:21px;">19</div>
<div class="rh" style="top:427px;height:21px;line-height:20px;">20</div>
<div class="rh" style="top:448px;height:21px;line-height:20px;">21</div>
<div class="rh" style="top:469px;height:21px;line-height:20px;">22</div>
<div class="rh" style="top:490px;height:21px;line-height:20px;">23</div>
<div class="rh" style="top:511px;height:21px;line-height:20px;">24</div>
<div class="rh" style="top:532px;height:21px;line-height:20px;">25</div>
<div class="rh" style="top:553px;height:21px;line-height:20px;">26</div>
<div class="rh" style="top:574px;height:21px;line-height:20px;">27</div>
<div class="rh" style="top:595px;height:22px;line-height:21px;">28</div>
<div class="rh" style="top:617px;height:21px;line-height:20px;">29</div>
<div class="rh" style="top:638px;height:22px;line-height:21px;">30</div>
<div class="rh" style="top:660px;height:21px;line-height:20px;">31</div>
<div class="rh" style="top:681px;height:21px;line-height:20px;">32</div>
<div class="rh" style="top:702px;height:21px;line-height:20px;background:#d2d2d2;color:#217346;border-right:2px solid #217346;width:26px;">33</div>
<div class="vl" style="left:92px"></div>
<div class="vl" style="left:159px"></div>
<div class="vl" style="left:226px"></div>
<div class="vl" style="left:293px"></div>
<div class="vl" style="left:360px"></div>
<div class="vl" style="left:427px"></div>
<div class="vl" style="left:494px"></div>
<div class="vl" style="left:561px"></div>
<div class="vl" style="left:628px"></div>
<div class="vl" style="left:695px"></div>
<div class="vl" style="left:762px"></div>
<div class="vl" style="left:829px"></div>
<div class="vl" style="left:896px"></div>
<div class="vl" style="left:963px"></div>
<div class="vl" style="left:1030px"></div>
<div class="vl" style="left:1097px"></div>
<div class="vl" style="left:1164px"></div>
<div class="vl" style="left:1231px"></div>
<div class="vl" style="left:1298px"></div>
<div class="vl" style="left:1365px"></div>
<div class="vl" style="left:1432px"></div>
<div class="vl" style="left:1499px"></div>
<div class="vl" style="left:1566px"></div>
<div class="vl" style="left:1633px"></div>
<div class="vl" style="left:1700px"></div>
<div class="vl" style="left:1767px"></div>
<div class="vl" style="left:1834px"></div>
<div class="vl" style="left:1901px"></div>
<div class="hl" style="top:43px"></div>
<div class="hl" style="top:65px"></div>
<div class="hl" style="top:87px"></div>
<div class="hl" style="top:108px"></div>
<div class="hl" style="top:129px"></div>
<div class="hl" style="top:150px"></div>
<div class="hl" style="top:171px"></div>
<div class="hl" style="top:193px"></div>
<div class="hl" style="top:215px"></div>
<div class="hl" style="top:236px"></div>
<div class="hl" style="top:257px"></div>
<div class="hl" style="top:278px"></div>
<div class="hl" style="top:299px"></div>
<div class="hl" style="top:320px"></div>
<div class="hl" style="top:341px"></div>
<div class="hl" style="top:362px"></div>
<div class="hl" style="top:383px"></div>
<div class="hl" style="top:404px"></div>
<div class="hl" style="top:426px"></div>
<div class="hl" style="top:447px"></div>
<div class="hl" style="top:468px"></div>
<div class="hl" style="top:489px"></div>
<div class="hl" style="top:510px"></div>
<div class="hl" style="top:531px"></div>
<div class="hl" style="top:552px"></div>
<div class="hl" style="top:573px"></div>
<div class="hl" style="top:594px"></div>
<div class="hl" style="top:616px"></div>
<div class="hl" style="top:637px"></div>
<div class="hl" style="top:659px"></div>
<div class="hl" style="top:680px"></div>
<div class="hl" style="top:701px"></div>
<div class="hl" style="top:722px"></div>
<div class="b" style="left:26px;top:616px;width:1868px;height:1px;background:#c4c4c4"></div>
<div class="b" style="left:26px;top:637px;width:1868px;height:2px;background:#c8c8c8"></div>
<div class="b" style="left:91px;top:616px;width:2px;height:22px;background:#c8c8c8"></div>
<div class="b" style="left:158px;top:616px;width:2px;height:22px;background:#c8c8c8"></div>
<div class="b" style="left:225px;top:616px;width:2px;height:22px;background:#c8c8c8"></div>
<div class="b" style="left:292px;top:616px;width:2px;height:22px;background:#c8c8c8"></div>
<div class="b" style="left:359px;top:616px;width:2px;height:22px;background:#c8c8c8"></div>
<div class="b" style="left:426px;top:616px;width:2px;height:22px;background:#c8c8c8"></div>
<div class="b" style="left:493px;top:616px;width:2px;height:22px;background:#c8c8c8"></div>
<div class="b" style="left:560px;top:616px;width:2px;height:22px;background:#c8c8c8"></div>
<div class="b" style="left:627px;top:616px;width:2px;height:22px;background:#c8c8c8"></div>
<div class="b" style="left:694px;top:616px;width:2px;height:22px;background:#c8c8c8"></div>
<div class="b" style="left:761px;top:616px;width:2px;height:22px;background:#c8c8c8"></div>
<div class="b" style="left:828px;top:616px;width:2px;height:22px;background:#c8c8c8"></div>
<div class="b" style="left:895px;top:616px;width:2px;height:22px;background:#c8c8c8"></div>
<div class="b" style="left:962px;top:616px;width:2px;height:22px;background:#c8c8c8"></div>
<div class="b" style="left:1029px;top:616px;width:2px;height:22px;background:#c8c8c8"></div>
<div class="b" style="left:1096px;top:616px;width:2px;height:22px;background:#c8c8c8"></div>
<div class="b" style="left:1163px;top:616px;width:2px;height:22px;background:#c8c8c8"></div>
<div class="b" style="left:1230px;top:616px;width:2px;height:22px;background:#c8c8c8"></div>
<div class="b" style="left:1297px;top:616px;width:2px;height:22px;background:#c8c8c8"></div>
<div class="b" style="left:1364px;top:616px;width:2px;height:22px;background:#c8c8c8"></div>
<div class="b" style="left:1431px;top:616px;width:2px;height:22px;background:#c8c8c8"></div>
<div class="b" style="left:1498px;top:616px;width:2px;height:22px;background:#c8c8c8"></div>
<div class="b" style="left:1565px;top:616px;width:2px;height:22px;background:#c8c8c8"></div>
<div class="b" style="left:1632px;top:616px;width:2px;height:22px;background:#c8c8c8"></div>
<div class="b" style="left:1699px;top:616px;width:2px;height:22px;background:#c8c8c8"></div>
<div class="b" style="left:1766px;top:616px;width:2px;height:22px;background:#c8c8c8"></div>
<div class="b" style="left:1833px;top:616px;width:2px;height:22px;background:#c8c8c8"></div>
<div class="b" style="left:1900px;top:616px;width:2px;height:22px;background:#c8c8c8"></div>
<div class="c m n" style="left:25px;top:21px;width:269px;height:23px;line-height:23.3px;left:26px;top:22px;width:267px;height:21px;line-height:20.5px;background:#fff;">5月27日</div>
<div class="c m n" style="left:293px;top:21px;width:269px;height:23px;line-height:23.3px;left:294px;top:22px;width:267px;height:21px;line-height:20.5px;background:#fff;">5月27日</div>
<div class="c m n" style="left:561px;top:21px;width:269px;height:23px;line-height:23.3px;left:562px;top:22px;width:267px;height:21px;line-height:20.5px;background:#fff;">5月27日</div>
<div class="c m n" style="left:829px;top:21px;width:269px;height:23px;line-height:23.3px;left:830px;top:22px;width:267px;height:21px;line-height:20.5px;background:#fff;">5月26日</div>
<div class="c m n" style="left:1097px;top:21px;width:269px;height:23px;line-height:23.3px;left:1098px;top:22px;width:267px;height:21px;line-height:20.5px;background:#fff;">5月25日</div>
<div class="c m n" style="left:1365px;top:21px;width:269px;height:23px;line-height:23.3px;left:1366px;top:22px;width:267px;height:21px;line-height:20.5px;background:#fff;">5月24日</div>
<div class="c m n" style="left:1633px;top:21px;width:269px;height:23px;line-height:23.3px;left:1634px;top:22px;width:267px;height:21px;line-height:20.5px;background:#fff;">5月21日</div>
<div class="c r n" style="left:26px;top:43px;width:67px;height:23px;line-height:23.3px;">100%</div>
<div class="c r n" style="left:92px;top:43px;width:68px;height:23px;line-height:23.3px;">28750.93</div>
<div class="c r n rd" style="left:293px;top:43px;width:68px;height:23px;line-height:23.3px;">102%</div>
<div class="c r n" style="left:360px;top:43px;width:68px;height:23px;line-height:23.3px;">28651.84</div>
<div class="c r n" style="left:561px;top:43px;width:68px;height:23px;line-height:23.3px;">100%</div>
<div class="c r n" style="left:628px;top:43px;width:68px;height:23px;line-height:23.3px;">28485.52</div>
<div class="c r n" style="left:829px;top:43px;width:68px;height:23px;line-height:23.3px;">101%</div>
<div class="c r n" style="left:896px;top:43px;width:68px;height:23px;line-height:23.3px;">28395.37</div>
<div class="c r n" style="left:1097px;top:43px;width:68px;height:23px;line-height:23.3px;">101%</div>
<div class="c r n" style="left:1164px;top:43px;width:68px;height:23px;line-height:23.3px;">28275.82</div>
<div class="c r n" style="left:1365px;top:43px;width:68px;height:23px;line-height:23.3px;">100%</div>
<div class="c r n" style="left:1432px;top:43px;width:68px;height:23px;line-height:23.3px;">28246.4</div>
<div class="c r n" style="left:1633px;top:43px;width:68px;height:23px;line-height:23.3px;">101%</div>
<div class="c r n" style="left:1700px;top:43px;width:68px;height:23px;line-height:23.3px;">28138.44</div>
<div class="c r n" style="left:293px;top:65px;width:68px;height:23px;line-height:23.3px;">101%</div>
<div class="c r n" style="left:360px;top:65px;width:68px;height:23px;line-height:23.3px;">28,860.08</div>
<div class="c r n rd" style="left:561px;top:65px;width:68px;height:23px;line-height:23.3px;">102%</div>
<div class="c r n" style="left:628px;top:65px;width:68px;height:23px;line-height:23.3px;">29,149.41</div>
<div class="c r n" style="left:829px;top:65px;width:68px;height:23px;line-height:23.3px;">101%</div>
<div class="c r n" style="left:896px;top:65px;width:68px;height:23px;line-height:23.3px;">28,549.01</div>
<div class="c r n" style="left:1097px;top:65px;width:68px;height:23px;line-height:23.3px;">101%</div>
<div class="c r n" style="left:1164px;top:65px;width:68px;height:23px;line-height:23.3px;">28,642.19</div>
<div class="c r n" style="left:1365px;top:65px;width:68px;height:23px;line-height:23.3px;">101%</div>
<div class="c r n" style="left:1432px;top:65px;width:68px;height:23px;line-height:23.3px;">28,553.98</div>
<div class="c r n" style="left:1633px;top:65px;width:68px;height:23px;line-height:23.3px;">101%</div>
<div class="c r n" style="left:1700px;top:65px;width:68px;height:23px;line-height:23.3px;">28,364.61</div>
<div class="c" style="left:26px;top:87px;width:67px;height:22px;line-height:22.3px;padding-left:1.8px;">夜間<span class="sl">/</span>日経</div>
<div class="c" style="left:92px;top:87px;width:68px;height:22px;line-height:22.3px;">ダウ前日比</div>
<div class="c s" style="left:159px;top:87px;width:68px;height:22px;line-height:22.3px;">円高</div>
<div class="c" style="left:226px;top:87px;width:68px;height:22px;line-height:22.3px;">TOP前日比</div>
<div class="c" style="left:293px;top:87px;width:68px;height:22px;line-height:22.3px;">夜間<span class="sl">/</span>日経</div>
<div class="c" style="left:360px;top:87px;width:68px;height:22px;line-height:22.3px;">ダウ前日比</div>
<div class="c s" style="left:427px;top:87px;width:68px;height:22px;line-height:22.3px;">円高</div>
<div class="c" style="left:494px;top:87px;width:68px;height:22px;line-height:22.3px;">TOP前日比</div>
<div class="c" style="left:561px;top:87px;width:68px;height:22px;line-height:22.3px;">夜間<span class="sl">/</span>日経</div>
<div class="c" style="left:628px;top:87px;width:68px;height:22px;line-height:22.3px;">ダウ前日比</div>
<div class="c s" style="left:695px;top:87px;width:68px;height:22px;line-height:22.3px;">円高</div>
<div class="c" style="left:762px;top:87px;width:68px;height:22px;line-height:22.3px;">TOP前日比</div>
<div class="c" style="left:829px;top:87px;width:68px;height:22px;line-height:22.3px;">夜間<span class="sl">/</span>日経</div>
<div class="c" style="left:896px;top:87px;width:68px;height:22px;line-height:22.3px;">ダウ前日比</div>
<div class="c s" style="left:963px;top:87px;width:68px;height:22px;line-height:22.3px;">円高</div>
<div class="c" style="left:1030px;top:87px;width:68px;height:22px;line-height:22.3px;">TOP前日比</div>
<div class="c" style="left:1097px;top:87px;width:68px;height:22px;line-height:22.3px;">夜間<span class="sl">/</span>日経</div>
<div class="c" style="left:1164px;top:87px;width:68px;height:22px;line-height:22.3px;">ダウ前日比</div>
<div class="c s" style="left:1231px;top:87px;width:68px;height:22px;line-height:22.3px;">円高</div>
<div class="c" style="left:1298px;top:87px;width:68px;height:22px;line-height:22.3px;">TOP前日比</div>
<div class="c" style="left:1365px;top:87px;width:68px;height:22px;line-height:22.3px;">夜間<span class="sl">/</span>日経</div>
<div class="c" style="left:1432px;top:87px;width:68px;height:22px;line-height:22.3px;">ダウ前日比</div>
<div class="c s" style="left:1499px;top:87px;width:68px;height:22px;line-height:22.3px;">円高</div>
<div class="c" style="left:1566px;top:87px;width:68px;height:22px;line-height:22.3px;">TOP前日比</div>
<div class="c" style="left:1633px;top:87px;width:68px;height:22px;line-height:22.3px;">夜間<span class="sl">/</span>日経</div>
<div class="c" style="left:1700px;top:87px;width:68px;height:22px;line-height:22.3px;">ダウ前日比</div>
<div class="c s" style="left:1767px;top:87px;width:68px;height:22px;line-height:22.3px;">円高</div>
<div class="c" style="left:1834px;top:87px;width:68px;height:22px;line-height:22.3px;">TOP前日比</div>
<div class="c r n p6" style="left:26px;top:108px;width:67px;height:22px;line-height:22.3px;">179.92</div>
<div class="c r n" style="left:92px;top:108px;width:68px;height:22px;line-height:22.3px;">0</div>
<div class="c r sn" style="left:159px;top:108px;width:68px;height:22px;line-height:22.3px;">0</div>
<div class="c r n bl" style="left:226px;top:108px;width:68px;height:22px;line-height:22.3px;">-24.46</div>
<div class="c r n bl p6" style="left:293px;top:108px;width:68px;height:22px;line-height:22.3px;">-109.41</div>
<div class="c r n o" style="left:360px;top:108px;width:68px;height:22px;line-height:22.3px;">65</div>
<div class="c r sn" style="left:427px;top:108px;width:68px;height:22px;line-height:22.3px;">0</div>
<div class="c r n o" style="left:494px;top:108px;width:68px;height:22px;line-height:22.3px;">36.42</div>
<div class="c r n o p6" style="left:561px;top:108px;width:68px;height:22px;line-height:22.3px;">330.99</div>
<div class="c r n o" style="left:628px;top:108px;width:68px;height:22px;line-height:22.3px;">141</div>
<div class="c r sn" style="left:695px;top:108px;width:68px;height:22px;line-height:22.3px;">0</div>
<div class="c r n bl" style="left:762px;top:108px;width:68px;height:22px;line-height:22.3px;">-9.65</div>
<div class="c r n bl p6" style="left:829px;top:108px;width:68px;height:22px;line-height:22.3px;">-22.19</div>
<div class="c r n o" style="left:896px;top:108px;width:68px;height:22px;line-height:22.3px;">11</div>
<div class="c r sn" style="left:963px;top:108px;width:68px;height:22px;line-height:22.3px;">0</div>
<div class="c r n o" style="left:1030px;top:108px;width:68px;height:22px;line-height:22.3px;">1.15</div>
<div class="c r n bl p6" style="left:1097px;top:108px;width:68px;height:22px;line-height:22.3px;">-143.98</div>
<div class="c r n bl" style="left:1164px;top:108px;width:68px;height:22px;line-height:22.3px;">-81</div>
<div class="c r sn" style="left:1231px;top:108px;width:68px;height:22px;line-height:22.3px;">0</div>
<div class="c r n o" style="left:1298px;top:108px;width:68px;height:22px;line-height:22.3px;">6.48</div>
<div class="c r n o p6" style="left:1365px;top:108px;width:68px;height:22px;line-height:22.3px;">115.39</div>
<div class="c r n o" style="left:1432px;top:108px;width:68px;height:22px;line-height:22.3px;">186</div>
<div class="c r sn" style="left:1499px;top:108px;width:68px;height:22px;line-height:22.3px;">0</div>
<div class="c r n o" style="left:1566px;top:108px;width:68px;height:22px;line-height:22.3px;">8.35</div>
<div class="c r n o p6" style="left:1633px;top:108px;width:68px;height:22px;line-height:22.3px;">72.17</div>
<div class="c r n o" style="left:1700px;top:108px;width:68px;height:22px;line-height:22.3px;">159</div>
<div class="c r sn bl" style="left:1767px;top:108px;width:68px;height:22px;line-height:22.3px;">-0.3</div>
<div class="c r n o" style="left:1834px;top:108px;width:68px;height:22px;line-height:22.3px;">8.77</div>
<div class="c" style="left:26px;top:129px;width:67px;height:22px;line-height:22.3px;padding-left:1.8px;">日経陽陰</div>
<div class="c" style="left:92px;top:129px;width:68px;height:22px;line-height:22.3px;">空売比率</div>
<div class="c s" style="left:159px;top:129px;width:68px;height:22px;line-height:22.3px;">マザ陽陰</div>
<div class="c" style="left:226px;top:129px;width:68px;height:22px;line-height:22.3px;">top陽陰</div>
<div class="c" style="left:293px;top:129px;width:68px;height:22px;line-height:22.3px;">日経陽陰</div>
<div class="c" style="left:360px;top:129px;width:68px;height:22px;line-height:22.3px;">空売比率</div>
<div class="c s" style="left:427px;top:129px;width:68px;height:22px;line-height:22.3px;">マザ陽陰</div>
<div class="c" style="left:494px;top:129px;width:68px;height:22px;line-height:22.3px;">top陽陰</div>
<div class="c" style="left:561px;top:129px;width:68px;height:22px;line-height:22.3px;">日経陽陰</div>
<div class="c" style="left:628px;top:129px;width:68px;height:22px;line-height:22.3px;">空売比率</div>
<div class="c s" style="left:695px;top:129px;width:68px;height:22px;line-height:22.3px;">マザ陽陰</div>
<div class="c" style="left:762px;top:129px;width:68px;height:22px;line-height:22.3px;">top陽陰</div>
<div class="c" style="left:829px;top:129px;width:68px;height:22px;line-height:22.3px;">日経陽陰</div>
<div class="c" style="left:896px;top:129px;width:68px;height:22px;line-height:22.3px;">空売比率</div>
<div class="c s" style="left:963px;top:129px;width:68px;height:22px;line-height:22.3px;">マザ陽陰</div>
<div class="c" style="left:1030px;top:129px;width:68px;height:22px;line-height:22.3px;">top陽陰</div>
<div class="c" style="left:1097px;top:129px;width:68px;height:22px;line-height:22.3px;">日経陽陰</div>
<div class="c" style="left:1164px;top:129px;width:68px;height:22px;line-height:22.3px;">空売比率</div>
<div class="c s" style="left:1231px;top:129px;width:68px;height:22px;line-height:22.3px;">マザ陽陰</div>
<div class="c" style="left:1298px;top:129px;width:68px;height:22px;line-height:22.3px;">top陽陰</div>
<div class="c" style="left:1365px;top:129px;width:68px;height:22px;line-height:22.3px;">日経陽陰</div>
<div class="c" style="left:1432px;top:129px;width:68px;height:22px;line-height:22.3px;">空売比率</div>
<div class="c s" style="left:1499px;top:129px;width:68px;height:22px;line-height:22.3px;">マザ陽陰</div>
<div class="c" style="left:1566px;top:129px;width:68px;height:22px;line-height:22.3px;">top陽陰</div>
<div class="c" style="left:1633px;top:129px;width:68px;height:22px;line-height:22.3px;">日経陽陰</div>
<div class="c" style="left:1700px;top:129px;width:68px;height:22px;line-height:22.3px;">空売比率</div>
<div class="c s" style="left:1767px;top:129px;width:68px;height:22px;line-height:22.3px;">マザ陽陰</div>
<div class="c" style="left:1834px;top:129px;width:68px;height:22px;line-height:22.3px;">top陽陰</div>
<div class="c bl" style="left:26px;top:150px;width:67px;height:22px;line-height:22.3px;padding-left:1.8px;">陰</div>
<div class="c r n bl" style="left:92px;top:150px;width:68px;height:22px;line-height:22.3px;">44%</div>
<div class="c o" style="left:159px;top:150px;width:68px;height:22px;line-height:22.3px;">陽</div>
<div class="c bl" style="left:226px;top:150px;width:68px;height:22px;line-height:22.3px;">陰</div>
<div class="c o" style="left:293px;top:150px;width:68px;height:22px;line-height:22.3px;">陽</div>
<div class="c r n o" style="left:360px;top:150px;width:68px;height:22px;line-height:22.3px;">36%</div>
<div class="c bl" style="left:427px;top:150px;width:68px;height:22px;line-height:22.3px;">陰</div>
<div class="c o" style="left:494px;top:150px;width:68px;height:22px;line-height:22.3px;">陽</div>
<div class="c o" style="left:561px;top:150px;width:68px;height:22px;line-height:22.3px;">陽</div>
<div class="c r n bl" style="left:628px;top:150px;width:68px;height:22px;line-height:22.3px;">44%</div>
<div class="c bl" style="left:695px;top:150px;width:68px;height:22px;line-height:22.3px;">陰</div>
<div class="c bl" style="left:762px;top:150px;width:68px;height:22px;line-height:22.3px;">陰</div>
<div class="c o" style="left:829px;top:150px;width:68px;height:22px;line-height:22.3px;">陽</div>
<div class="c r n bl" style="left:896px;top:150px;width:68px;height:22px;line-height:22.3px;">43%</div>
<div class="c o" style="left:963px;top:150px;width:68px;height:22px;line-height:22.3px;">陽</div>
<div class="c o" style="left:1030px;top:150px;width:68px;height:22px;line-height:22.3px;">陽</div>
<div class="c o" style="left:1097px;top:150px;width:68px;height:22px;line-height:22.3px;">陽</div>
<div class="c r n bl" style="left:1164px;top:150px;width:68px;height:22px;line-height:22.3px;">41%</div>
<div class="c o" style="left:1231px;top:150px;width:68px;height:22px;line-height:22.3px;">陽</div>
<div class="c bl" style="left:1298px;top:150px;width:68px;height:22px;line-height:22.3px;">陰</div>
<div class="c o" style="left:1365px;top:150px;width:68px;height:22px;line-height:22.3px;">陽</div>
<div class="c r n bl" style="left:1432px;top:150px;width:68px;height:22px;line-height:22.3px;">42%</div>
<div class="c bl" style="left:1499px;top:150px;width:68px;height:22px;line-height:22.3px;">陰</div>
<div class="c o" style="left:1566px;top:150px;width:68px;height:22px;line-height:22.3px;">陽</div>
<div class="c o" style="left:1633px;top:150px;width:68px;height:22px;line-height:22.3px;">陽</div>
<div class="c r n bl" style="left:1700px;top:150px;width:68px;height:22px;line-height:22.3px;">42%</div>
<div class="c o" style="left:1767px;top:150px;width:68px;height:22px;line-height:22.3px;">陽</div>
<div class="c o" style="left:1834px;top:150px;width:68px;height:22px;line-height:22.3px;">陽</div>
<div class="c" style="left:26px;top:171px;width:67px;height:23px;line-height:23.3px;padding-left:1.8px;">前日比</div>
<div class="c" style="left:92px;top:171px;width:68px;height:23px;line-height:23.3px;">値上下比</div>
<div class="c" style="left:159px;top:171px;width:68px;height:23px;line-height:23.3px;">値上</div>
<div class="c" style="left:226px;top:171px;width:68px;height:23px;line-height:23.3px;">値下</div>
<div class="c" style="left:293px;top:171px;width:68px;height:23px;line-height:23.3px;">前日比</div>
<div class="c" style="left:360px;top:171px;width:68px;height:23px;line-height:23.3px;">値上下比</div>
<div class="c" style="left:427px;top:171px;width:68px;height:23px;line-height:23.3px;">値上</div>
<div class="c" style="left:494px;top:171px;width:68px;height:23px;line-height:23.3px;">値下</div>
<div class="c" style="left:561px;top:171px;width:68px;height:23px;line-height:23.3px;">前日比</div>
<div class="c" style="left:628px;top:171px;width:68px;height:23px;line-height:23.3px;">値上下比</div>
<div class="c" style="left:695px;top:171px;width:68px;height:23px;line-height:23.3px;">値上</div>
<div class="c" style="left:762px;top:171px;width:68px;height:23px;line-height:23.3px;">値下</div>
<div class="c" style="left:829px;top:171px;width:68px;height:23px;line-height:23.3px;">前日比</div>
<div class="c" style="left:896px;top:171px;width:68px;height:23px;line-height:23.3px;">値上下比</div>
<div class="c" style="left:963px;top:171px;width:68px;height:23px;line-height:23.3px;">値上</div>
<div class="c" style="left:1030px;top:171px;width:68px;height:23px;line-height:23.3px;">値下</div>
<div class="c" style="left:1097px;top:171px;width:68px;height:23px;line-height:23.3px;">前日比</div>
<div class="c" style="left:1164px;top:171px;width:68px;height:23px;line-height:23.3px;">値上下比</div>
<div class="c" style="left:1231px;top:171px;width:68px;height:23px;line-height:23.3px;">値上</div>
<div class="c" style="left:1298px;top:171px;width:68px;height:23px;line-height:23.3px;">値下</div>
<div class="c" style="left:1365px;top:171px;width:68px;height:23px;line-height:23.3px;">前日比</div>
<div class="c" style="left:1432px;top:171px;width:68px;height:23px;line-height:23.3px;">値上下比</div>
<div class="c" style="left:1499px;top:171px;width:68px;height:23px;line-height:23.3px;">値上</div>
<div class="c" style="left:1566px;top:171px;width:68px;height:23px;line-height:23.3px;">値下</div>
<div class="c" style="left:1633px;top:171px;width:68px;height:23px;line-height:23.3px;">前日比</div>
<div class="c" style="left:1700px;top:171px;width:68px;height:23px;line-height:23.3px;">値上下比</div>
<div class="c" style="left:1767px;top:171px;width:68px;height:23px;line-height:23.3px;">値上</div>
<div class="c" style="left:1834px;top:171px;width:68px;height:23px;line-height:23.3px;">値下</div>
<div class="c r n bl" style="left:26px;top:193px;width:67px;height:23px;line-height:23.3px;">-289.33</div>
<div class="c r n bl" style="left:92px;top:193px;width:68px;height:23px;line-height:23.3px;">35%</div>
<div class="c r n" style="left:159px;top:193px;width:68px;height:23px;line-height:23.3px;">1550</div>
<div class="c r n bl" style="left:226px;top:193px;width:68px;height:23px;line-height:23.3px;">2819</div>
<div class="c r n o" style="left:293px;top:193px;width:68px;height:23px;line-height:23.3px;">600.4</div>
<div class="c r n y" style="left:360px;top:193px;width:68px;height:23px;line-height:23.3px;">71%</div>
<div class="c r n o" style="left:427px;top:193px;width:68px;height:23px;line-height:23.3px;">3119</div>
<div class="c r n" style="left:494px;top:193px;width:68px;height:23px;line-height:23.3px;">1283</div>
<div class="c r n bl" style="left:561px;top:193px;width:68px;height:23px;line-height:23.3px;">-93.18</div>
<div class="c r n bl" style="left:628px;top:193px;width:68px;height:23px;line-height:23.3px;">33%</div>
<div class="c r n" style="left:695px;top:193px;width:68px;height:23px;line-height:23.3px;">1438</div>
<div class="c r n bl" style="left:762px;top:193px;width:68px;height:23px;line-height:23.3px;">2922</div>
<div class="c r n o" style="left:829px;top:193px;width:68px;height:23px;line-height:23.3px;">88.21</div>
<div class="c r n bl" style="left:896px;top:193px;width:68px;height:23px;line-height:23.3px;">45%</div>
<div class="c r n" style="left:963px;top:193px;width:68px;height:23px;line-height:23.3px;">1937</div>
<div class="c r n bl" style="left:1030px;top:193px;width:68px;height:23px;line-height:23.3px;">2374</div>
<div class="c r n o" style="left:1097px;top:193px;width:68px;height:23px;line-height:23.3px;">189.37</div>
<div class="c r n bl" style="left:1164px;top:193px;width:68px;height:23px;line-height:23.3px;">46%</div>
<div class="c r n" style="left:1231px;top:193px;width:68px;height:23px;line-height:23.3px;">2015</div>
<div class="c r n bl" style="left:1298px;top:193px;width:68px;height:23px;line-height:23.3px;">2327</div>
<div class="c r n o" style="left:1365px;top:193px;width:68px;height:23px;line-height:23.3px;">46.78</div>
<div class="c r n o" style="left:1432px;top:193px;width:68px;height:23px;line-height:23.3px;">58%</div>
<div class="c r n o" style="left:1499px;top:193px;width:68px;height:23px;line-height:23.3px;">2521</div>
<div class="c r n" style="left:1566px;top:193px;width:68px;height:23px;line-height:23.3px;">1847</div>
<div class="c r n o" style="left:1633px;top:193px;width:68px;height:23px;line-height:23.3px;">219.58</div>
<div class="c r n o" style="left:1700px;top:193px;width:68px;height:23px;line-height:23.3px;">53%</div>
<div class="c r n o" style="left:1767px;top:193px;width:68px;height:23px;line-height:23.3px;">2329</div>
<div class="c r n" style="left:1834px;top:193px;width:68px;height:23px;line-height:23.3px;">2032</div>
<div class="c" style="left:92px;top:215px;width:68px;height:22px;line-height:22.3px;">東一前日比</div>
<div class="c" style="left:159px;top:215px;width:68px;height:22px;line-height:22.3px;">値上</div>
<div class="c" style="left:226px;top:215px;width:68px;height:22px;line-height:22.3px;">値下</div>
<div class="c" style="left:360px;top:215px;width:68px;height:22px;line-height:22.3px;">東一前日比</div>
<div class="c" style="left:427px;top:215px;width:68px;height:22px;line-height:22.3px;">値上</div>
<div class="c" style="left:494px;top:215px;width:68px;height:22px;line-height:22.3px;">値下</div>
<div class="c" style="left:628px;top:215px;width:68px;height:22px;line-height:22.3px;">東一前日比</div>
<div class="c" style="left:695px;top:215px;width:68px;height:22px;line-height:22.3px;">値上</div>
<div class="c" style="left:762px;top:215px;width:68px;height:22px;line-height:22.3px;">値下</div>
<div class="c" style="left:896px;top:215px;width:68px;height:22px;line-height:22.3px;">東一前日比</div>
<div class="c" style="left:963px;top:215px;width:68px;height:22px;line-height:22.3px;">値上</div>
<div class="c" style="left:1030px;top:215px;width:68px;height:22px;line-height:22.3px;">値下</div>
<div class="c" style="left:1164px;top:215px;width:68px;height:22px;line-height:22.3px;">東一前日比</div>
<div class="c" style="left:1231px;top:215px;width:68px;height:22px;line-height:22.3px;">値上</div>
<div class="c" style="left:1298px;top:215px;width:68px;height:22px;line-height:22.3px;">値下</div>
<div class="c" style="left:1432px;top:215px;width:68px;height:22px;line-height:22.3px;">東一前日比</div>
<div class="c" style="left:1499px;top:215px;width:68px;height:22px;line-height:22.3px;">値上</div>
<div class="c" style="left:1566px;top:215px;width:68px;height:22px;line-height:22.3px;">値下</div>
<div class="c" style="left:1700px;top:215px;width:68px;height:22px;line-height:22.3px;">東一前日比</div>
<div class="c" style="left:1767px;top:215px;width:68px;height:22px;line-height:22.3px;">値上</div>
<div class="c" style="left:1834px;top:215px;width:68px;height:22px;line-height:22.3px;">値下</div>
<div class="c n p" style="left:92px;top:236px;width:68px;height:22px;line-height:22.3px;">22%</div>
<div class="c n" style="left:159px;top:236px;width:68px;height:22px;line-height:22.3px;">501</div>
<div class="c n bl" style="left:226px;top:236px;width:68px;height:22px;line-height:22.3px;">1800</div>
<div class="c n y" style="left:360px;top:236px;width:68px;height:22px;line-height:22.3px;">83%</div>
<div class="c n o" style="left:427px;top:236px;width:68px;height:22px;line-height:22.3px;">1924</div>
<div class="c n" style="left:494px;top:236px;width:68px;height:22px;line-height:22.3px;">406</div>
<div class="c n p" style="left:628px;top:236px;width:68px;height:22px;line-height:22.3px;">24%</div>
<div class="c n" style="left:695px;top:236px;width:68px;height:22px;line-height:22.3px;">557</div>
<div class="c n bl" style="left:762px;top:236px;width:68px;height:22px;line-height:22.3px;">1732</div>
<div class="c n bl" style="left:896px;top:236px;width:68px;height:22px;line-height:22.3px;">38%</div>
<div class="c n" style="left:963px;top:236px;width:68px;height:22px;line-height:22.3px;">850</div>
<div class="c n bl" style="left:1030px;top:236px;width:68px;height:22px;line-height:22.3px;">1394</div>
<div class="c n bl" style="left:1164px;top:236px;width:68px;height:22px;line-height:22.3px;">34%</div>
<div class="c n" style="left:1231px;top:236px;width:68px;height:22px;line-height:22.3px;">782</div>
<div class="c n bl" style="left:1298px;top:236px;width:68px;height:22px;line-height:22.3px;">1502</div>
<div class="c n o" style="left:1432px;top:236px;width:68px;height:22px;line-height:22.3px;">65%</div>
<div class="c n o" style="left:1499px;top:236px;width:68px;height:22px;line-height:22.3px;">1478</div>
<div class="c n" style="left:1566px;top:236px;width:68px;height:22px;line-height:22.3px;">802</div>
<div class="c n o" style="left:1700px;top:236px;width:68px;height:22px;line-height:22.3px;">51%</div>
<div class="c n o" style="left:1767px;top:236px;width:68px;height:22px;line-height:22.3px;">1156</div>
<div class="c n" style="left:1834px;top:236px;width:68px;height:22px;line-height:22.3px;">1096</div>
<div class="c" style="left:92px;top:257px;width:68px;height:22px;line-height:22.3px;">東二前日比</div>
<div class="c" style="left:159px;top:257px;width:68px;height:22px;line-height:22.3px;">値上</div>
<div class="c" style="left:226px;top:257px;width:68px;height:22px;line-height:22.3px;">値下</div>
<div class="c" style="left:360px;top:257px;width:68px;height:22px;line-height:22.3px;">東二前日比</div>
<div class="c" style="left:427px;top:257px;width:68px;height:22px;line-height:22.3px;">値上</div>
<div class="c" style="left:494px;top:257px;width:68px;height:22px;line-height:22.3px;">値下</div>
<div class="c" style="left:628px;top:257px;width:68px;height:22px;line-height:22.3px;">東二前日比</div>
<div class="c" style="left:695px;top:257px;width:68px;height:22px;line-height:22.3px;">値上</div>
<div class="c" style="left:762px;top:257px;width:68px;height:22px;line-height:22.3px;">値下</div>
<div class="c" style="left:896px;top:257px;width:68px;height:22px;line-height:22.3px;">東二前日比</div>
<div class="c" style="left:963px;top:257px;width:68px;height:22px;line-height:22.3px;">値上</div>
<div class="c" style="left:1030px;top:257px;width:68px;height:22px;line-height:22.3px;">値下</div>
<div class="c" style="left:1164px;top:257px;width:68px;height:22px;line-height:22.3px;">東二前日比</div>
<div class="c" style="left:1231px;top:257px;width:68px;height:22px;line-height:22.3px;">値上</div>
<div class="c" style="left:1298px;top:257px;width:68px;height:22px;line-height:22.3px;">値下</div>
<div class="c" style="left:1432px;top:257px;width:68px;height:22px;line-height:22.3px;">東二前日比</div>
<div class="c" style="left:1499px;top:257px;width:68px;height:22px;line-height:22.3px;">値上</div>
<div class="c" style="left:1566px;top:257px;width:68px;height:22px;line-height:22.3px;">値下</div>
<div class="c" style="left:1700px;top:257px;width:68px;height:22px;line-height:22.3px;">東二前日比</div>
<div class="c" style="left:1767px;top:257px;width:68px;height:22px;line-height:22.3px;">値上</div>
<div class="c" style="left:1834px;top:257px;width:68px;height:22px;line-height:22.3px;">値下</div>
<div class="c n o" style="left:92px;top:278px;width:68px;height:22px;line-height:22.3px;">53%</div>
<div class="c n o" style="left:159px;top:278px;width:68px;height:22px;line-height:22.3px;">255</div>
<div class="c n" style="left:226px;top:278px;width:68px;height:22px;line-height:22.3px;">226</div>
<div class="c n o" style="left:360px;top:278px;width:68px;height:22px;line-height:22.3px;">56%</div>
<div class="c n o" style="left:427px;top:278px;width:68px;height:22px;line-height:22.3px;">268</div>
<div class="c n" style="left:494px;top:278px;width:68px;height:22px;line-height:22.3px;">211</div>
<div class="c n bl" style="left:628px;top:278px;width:68px;height:22px;line-height:22.3px;">42%</div>
<div class="c n" style="left:695px;top:278px;width:68px;height:22px;line-height:22.3px;">204</div>
<div class="c n bl" style="left:762px;top:278px;width:68px;height:22px;line-height:22.3px;">285</div>
<div class="c n bl" style="left:896px;top:278px;width:68px;height:22px;line-height:22.3px;">46%</div>
<div class="c n" style="left:963px;top:278px;width:68px;height:22px;line-height:22.3px;">227</div>
<div class="c n bl" style="left:1030px;top:278px;width:68px;height:22px;line-height:22.3px;">262</div>
<div class="c n o" style="left:1164px;top:278px;width:68px;height:22px;line-height:22.3px;">56%</div>
<div class="c n o" style="left:1231px;top:278px;width:68px;height:22px;line-height:22.3px;">271</div>
<div class="c n" style="left:1298px;top:278px;width:68px;height:22px;line-height:22.3px;">213</div>
<div class="c n o" style="left:1432px;top:278px;width:68px;height:22px;line-height:22.3px;">56%</div>
<div class="c n o" style="left:1499px;top:278px;width:68px;height:22px;line-height:22.3px;">271</div>
<div class="c n" style="left:1566px;top:278px;width:68px;height:22px;line-height:22.3px;">215</div>
<div class="c n o" style="left:1700px;top:278px;width:68px;height:22px;line-height:22.3px;">49%</div>
<div class="c n o" style="left:1767px;top:278px;width:68px;height:22px;line-height:22.3px;">245</div>
<div class="c n" style="left:1834px;top:278px;width:68px;height:22px;line-height:22.3px;">251</div>
<div class="c" style="left:26px;top:299px;width:67px;height:22px;line-height:22.3px;padding-left:1.8px;">JQ前日比</div>
<div class="c" style="left:92px;top:299px;width:68px;height:22px;line-height:22.3px;">jq前日比</div>
<div class="c" style="left:159px;top:299px;width:68px;height:22px;line-height:22.3px;">値上</div>
<div class="c" style="left:226px;top:299px;width:68px;height:22px;line-height:22.3px;">値下</div>
<div class="c" style="left:293px;top:299px;width:68px;height:22px;line-height:22.3px;">JQ前日比</div>
<div class="c" style="left:360px;top:299px;width:68px;height:22px;line-height:22.3px;">jq前日比</div>
<div class="c" style="left:427px;top:299px;width:68px;height:22px;line-height:22.3px;">値上</div>
<div class="c" style="left:494px;top:299px;width:68px;height:22px;line-height:22.3px;">値下</div>
<div class="c" style="left:561px;top:299px;width:68px;height:22px;line-height:22.3px;">JQ前日比</div>
<div class="c" style="left:628px;top:299px;width:68px;height:22px;line-height:22.3px;">jq前日比</div>
<div class="c" style="left:695px;top:299px;width:68px;height:22px;line-height:22.3px;">値上</div>
<div class="c" style="left:762px;top:299px;width:68px;height:22px;line-height:22.3px;">値下</div>
<div class="c" style="left:829px;top:299px;width:68px;height:22px;line-height:22.3px;">JQ前日比</div>
<div class="c" style="left:896px;top:299px;width:68px;height:22px;line-height:22.3px;">jq前日比</div>
<div class="c" style="left:963px;top:299px;width:68px;height:22px;line-height:22.3px;">値上</div>
<div class="c" style="left:1030px;top:299px;width:68px;height:22px;line-height:22.3px;">値下</div>
<div class="c" style="left:1097px;top:299px;width:68px;height:22px;line-height:22.3px;">JQ前日比</div>
<div class="c" style="left:1164px;top:299px;width:68px;height:22px;line-height:22.3px;">jq前日比</div>
<div class="c" style="left:1231px;top:299px;width:68px;height:22px;line-height:22.3px;">値上</div>
<div class="c" style="left:1298px;top:299px;width:68px;height:22px;line-height:22.3px;">値下</div>
<div class="c" style="left:1365px;top:299px;width:68px;height:22px;line-height:22.3px;">JQ前日比</div>
<div class="c" style="left:1432px;top:299px;width:68px;height:22px;line-height:22.3px;">jq前日比</div>
<div class="c" style="left:1499px;top:299px;width:68px;height:22px;line-height:22.3px;">値上</div>
<div class="c" style="left:1566px;top:299px;width:68px;height:22px;line-height:22.3px;">値下</div>
<div class="c" style="left:1633px;top:299px;width:68px;height:22px;line-height:22.3px;">JQ前日比</div>
<div class="c" style="left:1700px;top:299px;width:68px;height:22px;line-height:22.3px;">jq前日比</div>
<div class="c" style="left:1767px;top:299px;width:68px;height:22px;line-height:22.3px;">値上</div>
<div class="c" style="left:1834px;top:299px;width:68px;height:22px;line-height:22.3px;">値下</div>
<div class="c n o" style="left:26px;top:320px;width:67px;height:22px;line-height:22.3px;padding-left:1.8px;">8.12</div>
<div class="c n o" style="left:92px;top:320px;width:68px;height:22px;line-height:22.3px;">56%</div>
<div class="c n o" style="left:159px;top:320px;width:68px;height:22px;line-height:22.3px;">411</div>
<div class="c n" style="left:226px;top:320px;width:68px;height:22px;line-height:22.3px;">329</div>
<div class="c n o" style="left:293px;top:320px;width:68px;height:22px;line-height:22.3px;">10.05</div>
<div class="c n o" style="left:360px;top:320px;width:68px;height:22px;line-height:22.3px;">59%</div>
<div class="c n o" style="left:427px;top:320px;width:68px;height:22px;line-height:22.3px;">435</div>
<div class="c n" style="left:494px;top:320px;width:68px;height:22px;line-height:22.3px;">298</div>
<div class="c n o" style="left:561px;top:320px;width:68px;height:22px;line-height:22.3px;">1.23</div>
<div class="c n bl" style="left:628px;top:320px;width:68px;height:22px;line-height:22.3px;">43%</div>
<div class="c n" style="left:695px;top:320px;width:68px;height:22px;line-height:22.3px;">316</div>
<div class="c n bl" style="left:762px;top:320px;width:68px;height:22px;line-height:22.3px;">417</div>
<div class="c n bl" style="left:829px;top:320px;width:68px;height:22px;line-height:22.3px;">-2.81</div>
<div class="c n o" style="left:896px;top:320px;width:68px;height:22px;line-height:22.3px;">51%</div>
<div class="c n o" style="left:963px;top:320px;width:68px;height:22px;line-height:22.3px;">371</div>
<div class="c n" style="left:1030px;top:320px;width:68px;height:22px;line-height:22.3px;">358</div>
<div class="c n o" style="left:1097px;top:320px;width:68px;height:22px;line-height:22.3px;">17.64</div>
<div class="c n o" style="left:1164px;top:320px;width:68px;height:22px;line-height:22.3px;">59%</div>
<div class="c n o" style="left:1231px;top:320px;width:68px;height:22px;line-height:22.3px;">432</div>
<div class="c n" style="left:1298px;top:320px;width:68px;height:22px;line-height:22.3px;">305</div>
<div class="c n o" style="left:1365px;top:320px;width:68px;height:22px;line-height:22.3px;">1.58</div>
<div class="c n o" style="left:1432px;top:320px;width:68px;height:22px;line-height:22.3px;">50%</div>
<div class="c n o" style="left:1499px;top:320px;width:68px;height:22px;line-height:22.3px;">378</div>
<div class="c n" style="left:1566px;top:320px;width:68px;height:22px;line-height:22.3px;">372</div>
<div class="c n o" style="left:1633px;top:320px;width:68px;height:22px;line-height:22.3px;">14.84</div>
<div class="c n o" style="left:1700px;top:320px;width:68px;height:22px;line-height:22.3px;">59%</div>
<div class="c n o" style="left:1767px;top:320px;width:68px;height:22px;line-height:22.3px;">442</div>
<div class="c n" style="left:1834px;top:320px;width:68px;height:22px;line-height:22.3px;">312</div>
<div class="c" style="left:26px;top:341px;width:67px;height:22px;line-height:22.3px;padding-left:1.8px;">マザ前日比</div>
<div class="c" style="left:92px;top:341px;width:68px;height:22px;line-height:22.3px;">値上下比</div>
<div class="c" style="left:159px;top:341px;width:68px;height:22px;line-height:22.3px;">値上</div>
<div class="c" style="left:226px;top:341px;width:68px;height:22px;line-height:22.3px;">値下</div>
<div class="c" style="left:293px;top:341px;width:68px;height:22px;line-height:22.3px;">マザ前日比</div>
<div class="c" style="left:360px;top:341px;width:68px;height:22px;line-height:22.3px;">値上下比</div>
<div class="c" style="left:427px;top:341px;width:68px;height:22px;line-height:22.3px;">値上</div>
<div class="c" style="left:494px;top:341px;width:68px;height:22px;line-height:22.3px;">値下</div>
<div class="c" style="left:561px;top:341px;width:68px;height:22px;line-height:22.3px;">マザ前日比</div>
<div class="c" style="left:628px;top:341px;width:68px;height:22px;line-height:22.3px;">値上下比</div>
<div class="c" style="left:695px;top:341px;width:68px;height:22px;line-height:22.3px;">値上</div>
<div class="c" style="left:762px;top:341px;width:68px;height:22px;line-height:22.3px;">値下</div>
<div class="c" style="left:829px;top:341px;width:68px;height:22px;line-height:22.3px;">マザ前日比</div>
<div class="c" style="left:896px;top:341px;width:68px;height:22px;line-height:22.3px;">値上下比</div>
<div class="c" style="left:963px;top:341px;width:68px;height:22px;line-height:22.3px;">値上</div>
<div class="c" style="left:1030px;top:341px;width:68px;height:22px;line-height:22.3px;">値下</div>
<div class="c" style="left:1097px;top:341px;width:68px;height:22px;line-height:22.3px;">マザ前日比</div>
<div class="c" style="left:1164px;top:341px;width:68px;height:22px;line-height:22.3px;">値上下比</div>
<div class="c" style="left:1231px;top:341px;width:68px;height:22px;line-height:22.3px;">値上</div>
<div class="c" style="left:1298px;top:341px;width:68px;height:22px;line-height:22.3px;">値下</div>
<div class="c" style="left:1365px;top:341px;width:68px;height:22px;line-height:22.3px;">マザ前日比</div>
<div class="c" style="left:1432px;top:341px;width:68px;height:22px;line-height:22.3px;">値上下比</div>
<div class="c" style="left:1499px;top:341px;width:68px;height:22px;line-height:22.3px;">値上</div>
<div class="c" style="left:1566px;top:341px;width:68px;height:22px;line-height:22.3px;">値下</div>
<div class="c" style="left:1633px;top:341px;width:68px;height:22px;line-height:22.3px;">マザ前日比</div>
<div class="c" style="left:1700px;top:341px;width:68px;height:22px;line-height:22.3px;">値上下比</div>
<div class="c" style="left:1767px;top:341px;width:68px;height:22px;line-height:22.3px;">値上</div>
<div class="c" style="left:1834px;top:341px;width:68px;height:22px;line-height:22.3px;">値下</div>
<div class="c n o" style="left:26px;top:362px;width:67px;height:22px;line-height:22.3px;padding-left:1.8px;">4.87</div>
<div class="c n bl" style="left:92px;top:362px;width:68px;height:22px;line-height:22.3px;">42%</div>
<div class="c n" style="left:159px;top:362px;width:68px;height:22px;line-height:22.3px;">151</div>
<div class="c n bl" style="left:226px;top:362px;width:68px;height:22px;line-height:22.3px;">210</div>
<div class="c n bl" style="left:293px;top:362px;width:68px;height:22px;line-height:22.3px;">-0.69</div>
<div class="c n o" style="left:360px;top:362px;width:68px;height:22px;line-height:22.3px;">51%</div>
<div class="c n o" style="left:427px;top:362px;width:68px;height:22px;line-height:22.3px;">184</div>
<div class="c n" style="left:494px;top:362px;width:68px;height:22px;line-height:22.3px;">176</div>
<div class="c n bl" style="left:561px;top:362px;width:68px;height:22px;line-height:22.3px;">-2.70</div>
<div class="c n bl" style="left:628px;top:362px;width:68px;height:22px;line-height:22.3px;">34%</div>
<div class="c n" style="left:695px;top:362px;width:68px;height:22px;line-height:22.3px;">124</div>
<div class="c n bl" style="left:762px;top:362px;width:68px;height:22px;line-height:22.3px;">239</div>
<div class="c n o" style="left:829px;top:362px;width:68px;height:22px;line-height:22.3px;">15.10</div>
<div class="c n o" style="left:896px;top:362px;width:68px;height:22px;line-height:22.3px;">55%</div>
<div class="c n o" style="left:963px;top:362px;width:68px;height:22px;line-height:22.3px;">201</div>
<div class="c n" style="left:1030px;top:362px;width:68px;height:22px;line-height:22.3px;">165</div>
<div class="c n o" style="left:1097px;top:362px;width:68px;height:22px;line-height:22.3px;">25.13</div>
<div class="c n o" style="left:1164px;top:362px;width:68px;height:22px;line-height:22.3px;">58%</div>
<div class="c n o" style="left:1231px;top:362px;width:68px;height:22px;line-height:22.3px;">206</div>
<div class="c n" style="left:1298px;top:362px;width:68px;height:22px;line-height:22.3px;">148</div>
<div class="c n bl" style="left:1365px;top:362px;width:68px;height:22px;line-height:22.3px;">-20.31</div>
<div class="c n p" style="left:1432px;top:362px;width:68px;height:22px;line-height:22.3px;">28%</div>
<div class="c n" style="left:1499px;top:362px;width:68px;height:22px;line-height:22.3px;">103</div>
<div class="c n bl" style="left:1566px;top:362px;width:68px;height:22px;line-height:22.3px;">263</div>
<div class="c n o" style="left:1633px;top:362px;width:68px;height:22px;line-height:22.3px;">24.91</div>
<div class="c n o" style="left:1700px;top:362px;width:68px;height:22px;line-height:22.3px;">66%</div>
<div class="c n o" style="left:1767px;top:362px;width:68px;height:22px;line-height:22.3px;">240</div>
<div class="c n" style="left:1834px;top:362px;width:68px;height:22px;line-height:22.3px;">121</div>
<div class="c" style="left:26px;top:383px;width:67px;height:22px;line-height:22.3px;padding-left:1.8px;">終値</div>
<div class="c" style="left:92px;top:383px;width:68px;height:22px;line-height:22.3px;">始値</div>
<div class="c" style="left:159px;top:383px;width:68px;height:22px;line-height:22.3px;">高値</div>
<div class="c" style="left:226px;top:383px;width:68px;height:22px;line-height:22.3px;">安値</div>
<div class="c" style="left:293px;top:383px;width:68px;height:22px;line-height:22.3px;">終値</div>
<div class="c" style="left:360px;top:383px;width:68px;height:22px;line-height:22.3px;">始値</div>
<div class="c" style="left:427px;top:383px;width:68px;height:22px;line-height:22.3px;">高値</div>
<div class="c" style="left:494px;top:383px;width:68px;height:22px;line-height:22.3px;">安値</div>
<div class="c" style="left:561px;top:383px;width:68px;height:22px;line-height:22.3px;">終値</div>
<div class="c" style="left:628px;top:383px;width:68px;height:22px;line-height:22.3px;">始値</div>
<div class="c" style="left:695px;top:383px;width:68px;height:22px;line-height:22.3px;">高値</div>
<div class="c" style="left:762px;top:383px;width:68px;height:22px;line-height:22.3px;">安値</div>
<div class="c" style="left:829px;top:383px;width:68px;height:22px;line-height:22.3px;">終値</div>
<div class="c" style="left:896px;top:383px;width:68px;height:22px;line-height:22.3px;">始値</div>
<div class="c" style="left:963px;top:383px;width:68px;height:22px;line-height:22.3px;">高値</div>
<div class="c" style="left:1030px;top:383px;width:68px;height:22px;line-height:22.3px;">安値</div>
<div class="c" style="left:1097px;top:383px;width:68px;height:22px;line-height:22.3px;">終値</div>
<div class="c" style="left:1164px;top:383px;width:68px;height:22px;line-height:22.3px;">始値</div>
<div class="c" style="left:1231px;top:383px;width:68px;height:22px;line-height:22.3px;">高値</div>
<div class="c" style="left:1298px;top:383px;width:68px;height:22px;line-height:22.3px;">安値</div>
<div class="c" style="left:1365px;top:383px;width:68px;height:22px;line-height:22.3px;">終値</div>
<div class="c" style="left:1432px;top:383px;width:68px;height:22px;line-height:22.3px;">始値</div>
<div class="c" style="left:1499px;top:383px;width:68px;height:22px;line-height:22.3px;">高値</div>
<div class="c" style="left:1566px;top:383px;width:68px;height:22px;line-height:22.3px;">安値</div>
<div class="c" style="left:1633px;top:383px;width:68px;height:22px;line-height:22.3px;">終値</div>
<div class="c" style="left:1700px;top:383px;width:68px;height:22px;line-height:22.3px;">始値</div>
<div class="c" style="left:1767px;top:383px;width:68px;height:22px;line-height:22.3px;">高値</div>
<div class="c" style="left:1834px;top:383px;width:68px;height:22px;line-height:22.3px;">安値</div>
<div class="c r n" style="left:26px;top:404px;width:67px;height:23px;line-height:23.3px;">28,860.08</div>
<div class="c r n" style="left:92px;top:404px;width:68px;height:23px;line-height:23.3px;">29,019.45</div>
<div class="c r n" style="left:159px;top:404px;width:68px;height:23px;line-height:23.3px;">29,147.71</div>
<div class="c r n" style="left:226px;top:404px;width:68px;height:23px;line-height:23.3px;">28,791.60</div>
<div class="c r n" style="left:293px;top:404px;width:68px;height:23px;line-height:23.3px;">29,149.41</div>
<div class="c r n" style="left:360px;top:404px;width:68px;height:23px;line-height:23.3px;">28,912.54</div>
<div class="c r n" style="left:427px;top:404px;width:68px;height:23px;line-height:23.3px;">29,194.11</div>
<div class="c r n" style="left:494px;top:404px;width:68px;height:23px;line-height:23.3px;">28,899.66</div>
<div class="c r n" style="left:561px;top:404px;width:68px;height:23px;line-height:23.3px;">28,549.01</div>
<div class="c r n" style="left:628px;top:404px;width:68px;height:23px;line-height:23.3px;">28,543.32</div>
<div class="c r n" style="left:695px;top:404px;width:68px;height:23px;line-height:23.3px;">28,587.21</div>
<div class="c r n" style="left:762px;top:404px;width:68px;height:23px;line-height:23.3px;">28,360.56</div>
<div class="c r n" style="left:829px;top:404px;width:68px;height:23px;line-height:23.3px;">28,642.19</div>
<div class="c r n" style="left:896px;top:404px;width:68px;height:23px;line-height:23.3px;">28,396.62</div>
<div class="c r n" style="left:963px;top:404px;width:68px;height:23px;line-height:23.3px;">28,710.83</div>
<div class="c r n" style="left:1030px;top:404px;width:68px;height:23px;line-height:23.3px;">28,396.62</div>
<div class="c r n" style="left:1097px;top:404px;width:68px;height:23px;line-height:23.3px;">28,553.98</div>
<div class="c r n" style="left:1164px;top:404px;width:68px;height:23px;line-height:23.3px;">28,516.99</div>
<div class="c r n" style="left:1231px;top:404px;width:68px;height:23px;line-height:23.3px;">28,576.97</div>
<div class="c r n" style="left:1298px;top:404px;width:68px;height:23px;line-height:23.3px;">28,443.74</div>
<div class="c r n" style="left:1365px;top:404px;width:68px;height:23px;line-height:23.3px;">28,364.61</div>
<div class="c r n" style="left:1432px;top:404px;width:68px;height:23px;line-height:23.3px;">28,212.32</div>
<div class="c r n" style="left:1499px;top:404px;width:68px;height:23px;line-height:23.3px;">28,584.18</div>
<div class="c r n" style="left:1566px;top:404px;width:68px;height:23px;line-height:23.3px;">28,212.32</div>
<div class="c r n" style="left:1633px;top:404px;width:68px;height:23px;line-height:23.3px;">28,317.83</div>
<div class="c r n" style="left:1700px;top:404px;width:68px;height:23px;line-height:23.3px;">28,269.61</div>
<div class="c r n" style="left:1767px;top:404px;width:68px;height:23px;line-height:23.3px;">28,411.56</div>
<div class="c r n" style="left:1834px;top:404px;width:68px;height:23px;line-height:23.3px;">28,193.03</div>
<div class="c" style="left:26px;top:426px;width:67px;height:22px;line-height:22.3px;padding-left:1.8px;">マザ終値</div>
<div class="c" style="left:92px;top:426px;width:68px;height:22px;line-height:22.3px;">始値</div>
<div class="c" style="left:159px;top:426px;width:68px;height:22px;line-height:22.3px;">TOP終値</div>
<div class="c" style="left:226px;top:426px;width:68px;height:22px;line-height:22.3px;">始値</div>
<div class="c" style="left:293px;top:426px;width:68px;height:22px;line-height:22.3px;">マザ終値</div>
<div class="c" style="left:360px;top:426px;width:68px;height:22px;line-height:22.3px;">始値</div>
<div class="c" style="left:427px;top:426px;width:68px;height:22px;line-height:22.3px;">TOP終値</div>
<div class="c" style="left:494px;top:426px;width:68px;height:22px;line-height:22.3px;">始値</div>
<div class="c" style="left:561px;top:426px;width:68px;height:22px;line-height:22.3px;">マザ終値</div>
<div class="c" style="left:628px;top:426px;width:68px;height:22px;line-height:22.3px;">始値</div>
<div class="c" style="left:695px;top:426px;width:68px;height:22px;line-height:22.3px;">TOP終値</div>
<div class="c" style="left:762px;top:426px;width:68px;height:22px;line-height:22.3px;">始値</div>
<div class="c" style="left:829px;top:426px;width:68px;height:22px;line-height:22.3px;">マザ終値</div>
<div class="c" style="left:896px;top:426px;width:68px;height:22px;line-height:22.3px;">始値</div>
<div class="c" style="left:963px;top:426px;width:68px;height:22px;line-height:22.3px;">TOP終値</div>
<div class="c" style="left:1030px;top:426px;width:68px;height:22px;line-height:22.3px;">始値</div>
<div class="c" style="left:1097px;top:426px;width:68px;height:22px;line-height:22.3px;">マザ終値</div>
<div class="c" style="left:1164px;top:426px;width:68px;height:22px;line-height:22.3px;">始値</div>
<div class="c" style="left:1231px;top:426px;width:68px;height:22px;line-height:22.3px;">TOP終値</div>
<div class="c" style="left:1298px;top:426px;width:68px;height:22px;line-height:22.3px;">始値</div>
<div class="c" style="left:1365px;top:426px;width:68px;height:22px;line-height:22.3px;">マザ終値</div>
<div class="c" style="left:1432px;top:426px;width:68px;height:22px;line-height:22.3px;">始値</div>
<div class="c" style="left:1499px;top:426px;width:68px;height:22px;line-height:22.3px;">TOP終値</div>
<div class="c" style="left:1566px;top:426px;width:68px;height:22px;line-height:22.3px;">始値</div>
<div class="c" style="left:1633px;top:426px;width:68px;height:22px;line-height:22.3px;">マザ終値</div>
<div class="c" style="left:1700px;top:426px;width:68px;height:22px;line-height:22.3px;">始値</div>
<div class="c" style="left:1767px;top:426px;width:68px;height:22px;line-height:22.3px;">TOP終値</div>
<div class="c" style="left:1834px;top:426px;width:68px;height:22px;line-height:22.3px;">始値</div>
<div class="c r n" style="left:26px;top:447px;width:67px;height:22px;line-height:22.3px;">1,150.06</div>
<div class="c r n" style="left:159px;top:447px;width:68px;height:22px;line-height:22.3px;">1,922.98</div>
<div class="c r n" style="left:293px;top:447px;width:68px;height:22px;line-height:22.3px;">1,145.19</div>
<div class="c r n" style="left:427px;top:447px;width:68px;height:22px;line-height:22.3px;">1,947.44</div>
<div class="c r n" style="left:561px;top:447px;width:68px;height:22px;line-height:22.3px;">1,145.88</div>
<div class="c r n" style="left:695px;top:447px;width:68px;height:22px;line-height:22.3px;">1,911.02</div>
<div class="c r n" style="left:829px;top:447px;width:68px;height:22px;line-height:22.3px;">1,148.58</div>
<div class="c r n" style="left:963px;top:447px;width:68px;height:22px;line-height:22.3px;">1,920.67</div>
<div class="c r n" style="left:1097px;top:447px;width:68px;height:22px;line-height:22.3px;">1,133.48</div>
<div class="c r n" style="left:1231px;top:447px;width:68px;height:22px;line-height:22.3px;">1,919.52</div>
<div class="c r n" style="left:1365px;top:447px;width:68px;height:22px;line-height:22.3px;">1,108.35</div>
<div class="c r n" style="left:1499px;top:447px;width:68px;height:22px;line-height:22.3px;">1,913.04</div>
<div class="c r n" style="left:1633px;top:447px;width:68px;height:22px;line-height:22.3px;">1,128.66</div>
<div class="c r n" style="left:1767px;top:447px;width:68px;height:22px;line-height:22.3px;">1,904.69</div>
<div class="c" style="left:92px;top:468px;width:68px;height:22px;line-height:22.3px;">下降</div>
<div class="c ov" style="left:160px;top:469px;width:88px;height:20px;line-height:19.5px;padding-left:1.8px;">ジャスダック</div>
<div class="c" style="left:360px;top:468px;width:68px;height:22px;line-height:22.3px;">下降</div>
<div class="c ov" style="left:428px;top:469px;width:88px;height:20px;line-height:19.5px;padding-left:1.8px;">ジャスダック</div>
<div class="c" style="left:628px;top:468px;width:68px;height:22px;line-height:22.3px;">下降</div>
<div class="c ov" style="left:696px;top:469px;width:88px;height:20px;line-height:19.5px;padding-left:1.8px;">ジャスダック</div>
<div class="c" style="left:896px;top:468px;width:68px;height:22px;line-height:22.3px;">下降</div>
<div class="c ov" style="left:964px;top:469px;width:88px;height:20px;line-height:19.5px;padding-left:1.8px;">ジャスダック</div>
<div class="c" style="left:1164px;top:468px;width:68px;height:22px;line-height:22.3px;">下降</div>
<div class="c ov" style="left:1232px;top:469px;width:88px;height:20px;line-height:19.5px;padding-left:1.8px;">ジャスダック</div>
<div class="c" style="left:1432px;top:468px;width:68px;height:22px;line-height:22.3px;">下降</div>
<div class="c ov" style="left:1500px;top:469px;width:88px;height:20px;line-height:19.5px;padding-left:1.8px;">ジャスダック</div>
<div class="c" style="left:1700px;top:468px;width:68px;height:22px;line-height:22.3px;">下降</div>
<div class="c ov" style="left:1768px;top:469px;width:88px;height:20px;line-height:19.5px;padding-left:1.8px;">ジャスダック</div>
<div class="c" style="left:26px;top:489px;width:67px;height:22px;line-height:22.3px;padding-left:1.8px;">新</div>
<div class="c r n" style="left:159px;top:489px;width:68px;height:22px;line-height:22.3px;">3890.77</div>
<div class="c o" style="left:226px;top:489px;width:68px;height:22px;line-height:22.3px;">陽</div>
<div class="c" style="left:360px;top:489px;width:68px;height:22px;line-height:22.3px;">下降</div>
<div class="c r n" style="left:427px;top:489px;width:68px;height:22px;line-height:22.3px;">3882.65</div>
<div class="c o" style="left:494px;top:489px;width:68px;height:22px;line-height:22.3px;">陽</div>
<div class="c" style="left:628px;top:489px;width:68px;height:22px;line-height:22.3px;">下降</div>
<div class="c r n" style="left:695px;top:489px;width:68px;height:22px;line-height:22.3px;">3872.6</div>
<div class="c bl" style="left:762px;top:489px;width:68px;height:22px;line-height:22.3px;">陰</div>
<div class="c" style="left:896px;top:489px;width:68px;height:22px;line-height:22.3px;">下降</div>
<div class="c r n" style="left:963px;top:489px;width:68px;height:22px;line-height:22.3px;">3871.37</div>
<div class="c bl" style="left:1030px;top:489px;width:68px;height:22px;line-height:22.3px;">陰</div>
<div class="c" style="left:1097px;top:489px;width:68px;height:22px;line-height:22.3px;">新</div>
<div class="c" style="left:1164px;top:489px;width:68px;height:22px;line-height:22.3px;">下降</div>
<div class="c r n" style="left:1231px;top:489px;width:68px;height:22px;line-height:22.3px;">3874.18</div>
<div class="c o" style="left:1298px;top:489px;width:68px;height:22px;line-height:22.3px;">陽</div>
<div class="c r n" style="left:1499px;top:489px;width:68px;height:22px;line-height:22.3px;">3856.54</div>
<div class="c bl" style="left:1566px;top:489px;width:68px;height:22px;line-height:22.3px;">陰</div>
<div class="c r n" style="left:1767px;top:489px;width:68px;height:22px;line-height:22.3px;">3854.96</div>
<div class="c o" style="left:1834px;top:489px;width:68px;height:22px;line-height:22.3px;">陽</div>
<div class="c" style="left:26px;top:510px;width:67px;height:22px;line-height:22.3px;padding-left:1.8px;">先物夜間</div>
<div class="c" style="left:92px;top:510px;width:68px;height:22px;line-height:22.3px;">始値</div>
<div class="c" style="left:159px;top:510px;width:68px;height:22px;line-height:22.3px;">高値</div>
<div class="c" style="left:226px;top:510px;width:68px;height:22px;line-height:22.3px;">安値</div>
<div class="c" style="left:293px;top:510px;width:68px;height:22px;line-height:22.3px;">先物夜間</div>
<div class="c" style="left:360px;top:510px;width:68px;height:22px;line-height:22.3px;">始値</div>
<div class="c" style="left:427px;top:510px;width:68px;height:22px;line-height:22.3px;">高値</div>
<div class="c" style="left:494px;top:510px;width:68px;height:22px;line-height:22.3px;">安値</div>
<div class="c" style="left:561px;top:510px;width:68px;height:22px;line-height:22.3px;">先物夜間</div>
<div class="c" style="left:628px;top:510px;width:68px;height:22px;line-height:22.3px;">始値</div>
<div class="c" style="left:695px;top:510px;width:68px;height:22px;line-height:22.3px;">高値</div>
<div class="c" style="left:762px;top:510px;width:68px;height:22px;line-height:22.3px;">安値</div>
<div class="c" style="left:829px;top:510px;width:68px;height:22px;line-height:22.3px;">先物夜間</div>
<div class="c" style="left:896px;top:510px;width:68px;height:22px;line-height:22.3px;">始値</div>
<div class="c" style="left:963px;top:510px;width:68px;height:22px;line-height:22.3px;">高値</div>
<div class="c" style="left:1030px;top:510px;width:68px;height:22px;line-height:22.3px;">安値</div>
<div class="c" style="left:1097px;top:510px;width:68px;height:22px;line-height:22.3px;">先物夜間</div>
<div class="c" style="left:1164px;top:510px;width:68px;height:22px;line-height:22.3px;">始値</div>
<div class="c" style="left:1231px;top:510px;width:68px;height:22px;line-height:22.3px;">高値</div>
<div class="c" style="left:1298px;top:510px;width:68px;height:22px;line-height:22.3px;">安値</div>
<div class="c" style="left:1365px;top:510px;width:68px;height:22px;line-height:22.3px;">先物夜間</div>
<div class="c" style="left:1432px;top:510px;width:68px;height:22px;line-height:22.3px;">始値</div>
<div class="c" style="left:1499px;top:510px;width:68px;height:22px;line-height:22.3px;">高値</div>
<div class="c" style="left:1566px;top:510px;width:68px;height:22px;line-height:22.3px;">安値</div>
<div class="c" style="left:1633px;top:510px;width:68px;height:22px;line-height:22.3px;">先物夜間</div>
<div class="c" style="left:1700px;top:510px;width:68px;height:22px;line-height:22.3px;">始値</div>
<div class="c" style="left:1767px;top:510px;width:68px;height:22px;line-height:22.3px;">高値</div>
<div class="c" style="left:1834px;top:510px;width:68px;height:22px;line-height:22.3px;">安値</div>
<div class="c r n" style="left:26px;top:531px;width:67px;height:22px;line-height:22.3px;">29040</div>
<div class="c r n" style="left:293px;top:531px;width:68px;height:22px;line-height:22.3px;">29040</div>
<div class="c r n" style="left:561px;top:531px;width:68px;height:22px;line-height:22.3px;">28880</div>
<div class="c r n" style="left:829px;top:531px;width:68px;height:22px;line-height:22.3px;">28620</div>
<div class="c r n" style="left:1097px;top:531px;width:68px;height:22px;line-height:22.3px;">28410</div>
<div class="c r n" style="left:1365px;top:531px;width:68px;height:22px;line-height:22.3px;">28480</div>
<div class="c r n" style="left:1633px;top:531px;width:68px;height:22px;line-height:22.3px;">28390</div>
<div class="c" style="left:26px;top:552px;width:67px;height:22px;line-height:22.3px;padding-left:1.8px;">ダウ終値</div>
<div class="c" style="left:92px;top:552px;width:68px;height:22px;line-height:22.3px;">始値</div>
<div class="c" style="left:159px;top:552px;width:68px;height:22px;line-height:22.3px;">高値</div>
<div class="c" style="left:226px;top:552px;width:68px;height:22px;line-height:22.3px;">安値</div>
<div class="c" style="left:293px;top:552px;width:68px;height:22px;line-height:22.3px;">ダウ終値</div>
<div class="c" style="left:360px;top:552px;width:68px;height:22px;line-height:22.3px;">始値</div>
<div class="c" style="left:427px;top:552px;width:68px;height:22px;line-height:22.3px;">高値</div>
<div class="c" style="left:494px;top:552px;width:68px;height:22px;line-height:22.3px;">安値</div>
<div class="c" style="left:561px;top:552px;width:68px;height:22px;line-height:22.3px;">ダウ終値</div>
<div class="c" style="left:628px;top:552px;width:68px;height:22px;line-height:22.3px;">始値</div>
<div class="c" style="left:695px;top:552px;width:68px;height:22px;line-height:22.3px;">高値</div>
<div class="c" style="left:762px;top:552px;width:68px;height:22px;line-height:22.3px;">安値</div>
<div class="c" style="left:829px;top:552px;width:68px;height:22px;line-height:22.3px;">ダウ終値</div>
<div class="c" style="left:896px;top:552px;width:68px;height:22px;line-height:22.3px;">始値</div>
<div class="c" style="left:963px;top:552px;width:68px;height:22px;line-height:22.3px;">高値</div>
<div class="c" style="left:1030px;top:552px;width:68px;height:22px;line-height:22.3px;">安値</div>
<div class="c" style="left:1097px;top:552px;width:68px;height:22px;line-height:22.3px;">ダウ終値</div>
<div class="c" style="left:1164px;top:552px;width:68px;height:22px;line-height:22.3px;">始値</div>
<div class="c" style="left:1231px;top:552px;width:68px;height:22px;line-height:22.3px;">高値</div>
<div class="c" style="left:1298px;top:552px;width:68px;height:22px;line-height:22.3px;">安値</div>
<div class="c" style="left:1365px;top:552px;width:68px;height:22px;line-height:22.3px;">ダウ終値</div>
<div class="c" style="left:1432px;top:552px;width:68px;height:22px;line-height:22.3px;">始値</div>
<div class="c" style="left:1499px;top:552px;width:68px;height:22px;line-height:22.3px;">高値</div>
<div class="c" style="left:1566px;top:552px;width:68px;height:22px;line-height:22.3px;">安値</div>
<div class="c" style="left:1633px;top:552px;width:68px;height:22px;line-height:22.3px;">ダウ終値</div>
<div class="c" style="left:1700px;top:552px;width:68px;height:22px;line-height:22.3px;">始値</div>
<div class="c" style="left:1767px;top:552px;width:68px;height:22px;line-height:22.3px;">高値</div>
<div class="c" style="left:1834px;top:552px;width:68px;height:22px;line-height:22.3px;">安値</div>
<div class="c r n" style="left:26px;top:573px;width:67px;height:22px;line-height:22.3px;">34,529.00</div>
<div class="c r n" style="left:293px;top:573px;width:68px;height:22px;line-height:22.3px;">34,529.00</div>
<div class="c r n" style="left:561px;top:573px;width:68px;height:22px;line-height:22.3px;">34,464.00</div>
<div class="c r n" style="left:829px;top:573px;width:68px;height:22px;line-height:22.3px;">34,323.00</div>
<div class="c r n" style="left:1097px;top:573px;width:68px;height:22px;line-height:22.3px;">34,312.00</div>
<div class="c r n" style="left:1365px;top:573px;width:68px;height:22px;line-height:22.3px;">34,393.00</div>
<div class="c r n" style="left:1633px;top:573px;width:68px;height:22px;line-height:22.3px;">34,207.00</div>
<div class="c" style="left:26px;top:594px;width:67px;height:23px;line-height:23.3px;padding-left:1.8px;">為替終値</div>
<div class="c" style="left:92px;top:594px;width:68px;height:23px;line-height:23.3px;">始値</div>
<div class="c" style="left:159px;top:594px;width:68px;height:23px;line-height:23.3px;">高値</div>
<div class="c" style="left:226px;top:594px;width:68px;height:23px;line-height:23.3px;">安値</div>
<div class="c" style="left:293px;top:594px;width:68px;height:23px;line-height:23.3px;">為替終値</div>
<div class="c" style="left:360px;top:594px;width:68px;height:23px;line-height:23.3px;">始値</div>
<div class="c" style="left:427px;top:594px;width:68px;height:23px;line-height:23.3px;">高値</div>
<div class="c" style="left:494px;top:594px;width:68px;height:23px;line-height:23.3px;">安値</div>
<div class="c" style="left:561px;top:594px;width:68px;height:23px;line-height:23.3px;">為替終値</div>
<div class="c" style="left:628px;top:594px;width:68px;height:23px;line-height:23.3px;">始値</div>
<div class="c" style="left:695px;top:594px;width:68px;height:23px;line-height:23.3px;">高値</div>
<div class="c" style="left:762px;top:594px;width:68px;height:23px;line-height:23.3px;">安値</div>
<div class="c" style="left:829px;top:594px;width:68px;height:23px;line-height:23.3px;">為替終値</div>
<div class="c" style="left:896px;top:594px;width:68px;height:23px;line-height:23.3px;">始値</div>
<div class="c" style="left:963px;top:594px;width:68px;height:23px;line-height:23.3px;">高値</div>
<div class="c" style="left:1030px;top:594px;width:68px;height:23px;line-height:23.3px;">安値</div>
<div class="c" style="left:1097px;top:594px;width:68px;height:23px;line-height:23.3px;">為替終値</div>
<div class="c" style="left:1164px;top:594px;width:68px;height:23px;line-height:23.3px;">始値</div>
<div class="c" style="left:1231px;top:594px;width:68px;height:23px;line-height:23.3px;">高値</div>
<div class="c" style="left:1298px;top:594px;width:68px;height:23px;line-height:23.3px;">安値</div>
<div class="c" style="left:1365px;top:594px;width:68px;height:23px;line-height:23.3px;">為替終値</div>
<div class="c" style="left:1432px;top:594px;width:68px;height:23px;line-height:23.3px;">始値</div>
<div class="c" style="left:1499px;top:594px;width:68px;height:23px;line-height:23.3px;">高値</div>
<div class="c" style="left:1566px;top:594px;width:68px;height:23px;line-height:23.3px;">安値</div>
<div class="c" style="left:1633px;top:594px;width:68px;height:23px;line-height:23.3px;">為替終値</div>
<div class="c" style="left:1700px;top:594px;width:68px;height:23px;line-height:23.3px;">始値</div>
<div class="c" style="left:1767px;top:594px;width:68px;height:23px;line-height:23.3px;">高値</div>
<div class="c" style="left:1834px;top:594px;width:68px;height:23px;line-height:23.3px;">安値</div>
<div class="c r g" style="left:26px;top:616px;width:67px;height:22px;line-height:22.3px;">108.78</div>
<div class="c r g" style="left:92px;top:616px;width:68px;height:22px;line-height:22.3px;">108.79</div>
<div class="c r g" style="left:159px;top:616px;width:68px;height:22px;line-height:22.3px;">108.9</div>
<div class="c r g" style="left:226px;top:616px;width:68px;height:22px;line-height:22.3px;">108.69</div>
<div class="c r g" style="left:293px;top:616px;width:68px;height:22px;line-height:22.3px;">108.78</div>
<div class="c r g" style="left:360px;top:616px;width:68px;height:22px;line-height:22.3px;">108.79</div>
<div class="c r g" style="left:427px;top:616px;width:68px;height:22px;line-height:22.3px;">108.9</div>
<div class="c r g" style="left:494px;top:616px;width:68px;height:22px;line-height:22.3px;">108.69</div>
<div class="c r g" style="left:561px;top:616px;width:68px;height:22px;line-height:22.3px;">108.78</div>
<div class="c r g" style="left:628px;top:616px;width:68px;height:22px;line-height:22.3px;">108.79</div>
<div class="c r g" style="left:695px;top:616px;width:68px;height:22px;line-height:22.3px;">108.9</div>
<div class="c r g" style="left:762px;top:616px;width:68px;height:22px;line-height:22.3px;">108.69</div>
<div class="c r g" style="left:829px;top:616px;width:68px;height:22px;line-height:22.3px;">108.78</div>
<div class="c r g" style="left:896px;top:616px;width:68px;height:22px;line-height:22.3px;">108.79</div>
<div class="c r g" style="left:963px;top:616px;width:68px;height:22px;line-height:22.3px;">108.9</div>
<div class="c r g" style="left:1030px;top:616px;width:68px;height:22px;line-height:22.3px;">108.69</div>
<div class="c r g" style="left:1097px;top:616px;width:68px;height:22px;line-height:22.3px;">108.78</div>
<div class="c r g" style="left:1164px;top:616px;width:68px;height:22px;line-height:22.3px;">108.79</div>
<div class="c r g" style="left:1231px;top:616px;width:68px;height:22px;line-height:22.3px;">108.9</div>
<div class="c r g" style="left:1298px;top:616px;width:68px;height:22px;line-height:22.3px;">108.69</div>
<div class="c r g" style="left:1365px;top:616px;width:68px;height:22px;line-height:22.3px;">108.78</div>
<div class="c r g" style="left:1432px;top:616px;width:68px;height:22px;line-height:22.3px;">108.79</div>
<div class="c r g" style="left:1499px;top:616px;width:68px;height:22px;line-height:22.3px;">108.9</div>
<div class="c r g" style="left:1566px;top:616px;width:68px;height:22px;line-height:22.3px;">108.69</div>
<div class="c r g" style="left:1633px;top:616px;width:68px;height:22px;line-height:22.3px;">108.78</div>
<div class="c r g" style="left:1700px;top:616px;width:68px;height:22px;line-height:22.3px;">108.79</div>
<div class="c r g" style="left:1767px;top:616px;width:68px;height:22px;line-height:22.3px;">108.9</div>
<div class="c r g" style="left:1834px;top:616px;width:68px;height:22px;line-height:22.3px;">108.69</div>
<div class="c" style="left:26px;top:659px;width:67px;height:22px;line-height:22.3px;padding-left:1.8px;">前日比</div>
<div class="c n o" style="left:92px;top:659px;width:68px;height:22px;line-height:22.3px;">46</div>
<div class="c" style="left:159px;top:659px;width:68px;height:22px;line-height:22.3px;">前日比</div>
<div class="c n bl" style="left:226px;top:659px;width:68px;height:22px;line-height:22.3px;">-92</div>
<div class="c" style="left:293px;top:659px;width:68px;height:22px;line-height:22.3px;">前日比</div>
<div class="c n bl" style="left:360px;top:659px;width:68px;height:22px;line-height:22.3px;">-42</div>
<div class="c" style="left:427px;top:659px;width:68px;height:22px;line-height:22.3px;">前日比</div>
<div class="c n o" style="left:494px;top:659px;width:68px;height:22px;line-height:22.3px;">87</div>
<div class="c" style="left:561px;top:659px;width:68px;height:22px;line-height:22.3px;">前日比</div>
<div class="c n o" style="left:628px;top:659px;width:68px;height:22px;line-height:22.3px;">15</div>
<div class="c" style="left:695px;top:659px;width:68px;height:22px;line-height:22.3px;">前日比</div>
<div class="c n bl" style="left:762px;top:659px;width:68px;height:22px;line-height:22.3px;">-35</div>
<div class="c" style="left:829px;top:659px;width:68px;height:22px;line-height:22.3px;">前日比</div>
<div class="c n bl" style="left:896px;top:659px;width:68px;height:22px;line-height:22.3px;">-18</div>
<div class="c" style="left:963px;top:659px;width:68px;height:22px;line-height:22.3px;">前日比</div>
<div class="c n o" style="left:1030px;top:659px;width:68px;height:22px;line-height:22.3px;">12</div>
<div class="c" style="left:1097px;top:659px;width:68px;height:22px;line-height:22.3px;">前日比</div>
<div class="c n o" style="left:1164px;top:659px;width:68px;height:22px;line-height:22.3px;">23</div>
<div class="c" style="left:1231px;top:659px;width:68px;height:22px;line-height:22.3px;">前日比</div>
<div class="c n bl" style="left:1298px;top:659px;width:68px;height:22px;line-height:22.3px;">-24</div>
<div class="c" style="left:1365px;top:659px;width:68px;height:22px;line-height:22.3px;">前日比</div>
<div class="c n o" style="left:1432px;top:659px;width:68px;height:22px;line-height:22.3px;">2</div>
<div class="c" style="left:1499px;top:659px;width:68px;height:22px;line-height:22.3px;">前日比</div>
<div class="c n o" style="left:1566px;top:659px;width:68px;height:22px;line-height:22.3px;">7</div>
<div class="c" style="left:1633px;top:659px;width:68px;height:22px;line-height:22.3px;">前日比</div>
<div class="c n o" style="left:1700px;top:659px;width:68px;height:22px;line-height:22.3px;">21</div>
<div class="c" style="left:1767px;top:659px;width:68px;height:22px;line-height:22.3px;">前日比</div>
<div class="c n bl" style="left:1834px;top:659px;width:68px;height:22px;line-height:22.3px;">-26</div>
<div class="c" style="left:26px;top:680px;width:67px;height:22px;line-height:22.3px;padding-left:1.8px;">買い</div>
<div class="c" style="left:159px;top:680px;width:68px;height:22px;line-height:22.3px;">売り</div>
<div class="c" style="left:293px;top:680px;width:68px;height:22px;line-height:22.3px;">買い</div>
<div class="c" style="left:427px;top:680px;width:68px;height:22px;line-height:22.3px;">売り</div>
<div class="c" style="left:561px;top:680px;width:68px;height:22px;line-height:22.3px;">買い</div>
<div class="c" style="left:695px;top:680px;width:68px;height:22px;line-height:22.3px;">売り</div>
<div class="c" style="left:829px;top:680px;width:68px;height:22px;line-height:22.3px;">買い</div>
<div class="c" style="left:963px;top:680px;width:68px;height:22px;line-height:22.3px;">売り</div>
<div class="c" style="left:1097px;top:680px;width:68px;height:22px;line-height:22.3px;">買い</div>
<div class="c" style="left:1231px;top:680px;width:68px;height:22px;line-height:22.3px;">売り</div>
<div class="c" style="left:1365px;top:680px;width:68px;height:22px;line-height:22.3px;">買い</div>
<div class="c" style="left:1499px;top:680px;width:68px;height:22px;line-height:22.3px;">売り</div>
<div class="c" style="left:1633px;top:680px;width:68px;height:22px;line-height:22.3px;">買い</div>
<div class="c" style="left:1767px;top:680px;width:68px;height:22px;line-height:22.3px;">売り</div>
<div class="c n" style="left:26px;top:701px;width:67px;height:22px;line-height:22.3px;padding-left:1.8px;">404</div>
<div class="c n o" style="left:92px;top:701px;width:68px;height:22px;line-height:22.3px;">22</div>
<div class="c n" style="left:159px;top:701px;width:68px;height:22px;line-height:22.3px;">764</div>
<div class="c n bl" style="left:226px;top:701px;width:68px;height:22px;line-height:22.3px;">-36</div>
<div class="c n" style="left:293px;top:701px;width:68px;height:22px;line-height:22.3px;">382</div>
<div class="c n bl" style="left:360px;top:701px;width:68px;height:22px;line-height:22.3px;">-24</div>
<div class="c n" style="left:427px;top:701px;width:68px;height:22px;line-height:22.3px;">800</div>
<div class="c n o" style="left:494px;top:701px;width:68px;height:22px;line-height:22.3px;">56</div>
<div class="c n" style="left:561px;top:701px;width:68px;height:22px;line-height:22.3px;">406</div>
<div class="c n o" style="left:628px;top:701px;width:68px;height:22px;line-height:22.3px;">18</div>
<div class="c n" style="left:695px;top:701px;width:68px;height:22px;line-height:22.3px;">744</div>
<div class="c n bl" style="left:762px;top:701px;width:68px;height:22px;line-height:22.3px;">-31</div>
<div class="c n" style="left:829px;top:701px;width:68px;height:22px;line-height:22.3px;">388</div>
<div class="c n o" style="left:896px;top:701px;width:68px;height:22px;line-height:22.3px;">3</div>
<div class="c n" style="left:963px;top:701px;width:68px;height:22px;line-height:22.3px;">775</div>
<div class="c n o" style="left:1030px;top:701px;width:68px;height:22px;line-height:22.3px;">4</div>
<div class="c n" style="left:1097px;top:701px;width:68px;height:22px;line-height:22.3px;">385</div>
<div class="c n o" style="left:1164px;top:701px;width:68px;height:22px;line-height:22.3px;">21</div>
<div class="c n" style="left:1231px;top:701px;width:68px;height:22px;line-height:22.3px;">771</div>
<div class="c n bl" style="left:1298px;top:701px;width:68px;height:22px;line-height:22.3px;">-8</div>
<div class="c n" style="left:1365px;top:701px;width:68px;height:22px;line-height:22.3px;">364</div>
<div class="c n bl" style="left:1432px;top:701px;width:68px;height:22px;line-height:22.3px;">-2</div>
<div class="c n" style="left:1499px;top:701px;width:68px;height:22px;line-height:22.3px;">779</div>
<div class="c n o" style="left:1566px;top:701px;width:68px;height:22px;line-height:22.3px;">16</div>
<div class="c n" style="left:1633px;top:701px;width:68px;height:22px;line-height:22.3px;">366</div>
<div class="c n bl" style="left:1700px;top:701px;width:68px;height:22px;line-height:22.3px;">-4</div>
<div class="c n" style="left:1767px;top:701px;width:68px;height:22px;line-height:22.3px;">763</div>
<div class="c n o" style="left:1834px;top:701px;width:68px;height:22px;line-height:22.3px;">9</div>
<div class="b" style="left:92px;top:681px;width:1px;height:20px;background:#fff"></div>
<div class="b" style="left:226px;top:681px;width:1px;height:20px;background:#fff"></div>
<div class="b" style="left:360px;top:681px;width:1px;height:20px;background:#fff"></div>
<div class="b" style="left:494px;top:681px;width:1px;height:20px;background:#fff"></div>
<div class="b" style="left:628px;top:681px;width:1px;height:20px;background:#fff"></div>
<div class="b" style="left:762px;top:681px;width:1px;height:20px;background:#fff"></div>
<div class="b" style="left:896px;top:681px;width:1px;height:20px;background:#fff"></div>
<div class="b" style="left:1030px;top:681px;width:1px;height:20px;background:#fff"></div>
<div class="b" style="left:1164px;top:681px;width:1px;height:20px;background:#fff"></div>
<div class="b" style="left:1298px;top:681px;width:1px;height:20px;background:#fff"></div>
<div class="b" style="left:1432px;top:681px;width:1px;height:20px;background:#fff"></div>
<div class="b" style="left:1566px;top:681px;width:1px;height:20px;background:#fff"></div>
<div class="b" style="left:1700px;top:681px;width:1px;height:20px;background:#fff"></div>
<div class="b" style="left:1834px;top:681px;width:1px;height:20px;background:#fff"></div>
<div class="k" style="left:26px;top:42px;width:1868px;height:2px"></div>
<div class="k" style="left:26px;top:64px;width:1868px;height:2px"></div>
<div class="k" style="left:26px;top:86px;width:1868px;height:2px"></div>
<div class="k" style="left:292px;top:22px;width:2px;height:383px"></div>
<div class="k" style="left:292px;top:426px;width:2px;height:191px"></div>
<div class="k" style="left:292px;top:637px;width:2px;height:91px"></div>
<div class="k" style="left:560px;top:22px;width:2px;height:383px"></div>
<div class="k" style="left:560px;top:426px;width:2px;height:191px"></div>
<div class="k" style="left:560px;top:637px;width:2px;height:91px"></div>
<div class="k" style="left:828px;top:22px;width:2px;height:383px"></div>
<div class="k" style="left:828px;top:426px;width:2px;height:191px"></div>
<div class="k" style="left:828px;top:637px;width:2px;height:91px"></div>
<div class="k" style="left:1096px;top:22px;width:2px;height:383px"></div>
<div class="k" style="left:1096px;top:426px;width:2px;height:191px"></div>
<div class="k" style="left:1096px;top:637px;width:2px;height:91px"></div>
<div class="k" style="left:1364px;top:22px;width:2px;height:383px"></div>
<div class="k" style="left:1364px;top:426px;width:2px;height:191px"></div>
<div class="k" style="left:1364px;top:637px;width:2px;height:91px"></div>
<div class="k" style="left:1632px;top:22px;width:2px;height:383px"></div>
<div class="k" style="left:1632px;top:426px;width:2px;height:191px"></div>
<div class="k" style="left:1632px;top:637px;width:2px;height:91px"></div>
<div class="k" style="left:158px;top:43px;width:2px;height:45px"></div>
<div class="k" style="left:426px;top:43px;width:2px;height:45px"></div>
<div class="k" style="left:694px;top:43px;width:2px;height:45px"></div>
<div class="k" style="left:962px;top:43px;width:2px;height:45px"></div>
<div class="k" style="left:1230px;top:43px;width:2px;height:45px"></div>
<div class="k" style="left:1498px;top:43px;width:2px;height:45px"></div>
<div class="k" style="left:1766px;top:43px;width:2px;height:45px"></div>
<div class="b" style="left:1894px;top:22px;width:1px;height:696px;background:#c6c6c6"></div>
<svg class="b" style="left:93px;top:702px" width="7" height="7"><path d="M0 0 L6 0 L0 6 Z" fill="#217346"/></svg>
<div class="b" style="left:225px;top:700px;width:70px;height:24px;border:2px solid #217346;box-sizing:border-box;box-shadow:inset 0 0 0 1px #fff"></div></div>
<div class="b" style="left:1895px;top:258px;width:25px;height:718px;background:#e6e6e6;"></div>
<div class="b" style="left:1898px;top:279px;width:19px;height:680px;background:#d9d9d9;"></div>
<div class="b" style="left:1898px;top:260px;width:19px;height:19px;background:#fff;border:1px solid #c6c6c6;box-sizing:border-box;"></div>
<svg class="b" style="left:1902px;top:266px;" width="11" height="8" viewBox="0 0 11 8"><path d="M1 7 L5.500 1.500 L10 7 Z" fill="#777"/></svg>
<div class="b" style="left:1898px;top:279px;width:19px;height:21px;background:#fff;border:1px solid #c6c6c6;box-sizing:border-box;"></div>
<div class="b" style="left:1898px;top:957px;width:19px;height:19px;background:#fff;border:1px solid #c6c6c6;box-sizing:border-box;"></div>
<svg class="b" style="left:1902px;top:963px;" width="11" height="8" viewBox="0 0 11 8"><path d="M1 1 L5.500 6.500 L10 1 Z" fill="#777"/></svg>
<div class="b" style="left:0px;top:975px;width:1920px;height:1px;background:#9f9f9f;"></div>
<div class="b" style="left:0px;top:976px;width:1920px;height:27px;background:#e6e6e6;"></div>
<div class="b" style="left:0px;top:1003px;width:1920px;height:1px;background:#cfcfcf;"></div>
<svg class="b" style="left:27px;top:984px;" width="8" height="10" viewBox="0 0 8 10"><path d="M7 0.500 V9.500 L1 5 Z" fill="#217346"/></svg>
<svg class="b" style="left:54px;top:984px;" width="8" height="10" viewBox="0 0 8 10"><path d="M1 0.500 V9.500 L7 5 Z" fill="#217346"/></svg>
<span class="t" style="left:79px;top:973.0px;font-size:16px;line-height:24px;color:#217346;font-weight:bold;transform-origin:0 50%;transform:scaleX(1.077);">...</span>
<div class="b" style="left:100px;top:980px;width:1px;height:19px;background:#b0b0b0;"></div>
<div class="b" style="left:103px;top:978px;width:52px;height:22px;background:#ffff00;"></div>
<span class="t" style="left:113.5px;top:972.5px;font-size:17.5px;line-height:26px;color:#262626;transform-origin:0 50%;transform:scaleX(1);">RSI</span>
<div class="b" style="left:157px;top:980px;width:1px;height:19px;background:#b0b0b0;"></div>
<div class="b" style="left:160px;top:978px;width:138px;height:22px;background:#ffff00;"></div>
<span class="t" style="left:172px;top:972.5px;font-size:17.5px;line-height:26px;color:#262626;transform-origin:0 50%;transform:scaleX(0.837);">エンベロープ指標</span>
<div class="b" style="left:300px;top:980px;width:1px;height:19px;background:#b0b0b0;"></div>
<span class="t" style="left:314px;top:972.5px;font-size:17.5px;line-height:26px;color:#444;transform-origin:0 50%;transform:scaleX(0.9124);">業種別張り付けば</span>
<div class="b" style="left:453px;top:980px;width:1px;height:19px;background:#b0b0b0;"></div>
<div class="b" style="left:456px;top:978px;width:104px;height:22px;background:#ed7d31;"></div>
<span class="t" style="left:465px;top:972.5px;font-size:17.5px;line-height:26px;color:#262626;transform-origin:0 50%;transform:scaleX(0.9659);">業種別株価</span>
<div class="b" style="left:562px;top:980px;width:1px;height:19px;background:#b0b0b0;"></div>
<div class="b" style="left:565px;top:978px;width:70px;height:22px;background:#ed7d31;"></div>
<span class="t" style="left:574.5px;top:972.5px;font-size:17.5px;line-height:26px;color:#262626;transform-origin:0 50%;transform:scaleX(0.9434);">業種別</span>
<div class="b" style="left:637px;top:980px;width:1px;height:19px;background:#b0b0b0;"></div>
<div class="b" style="left:640px;top:978px;width:152px;height:22px;background:#ed7d31;"></div>
<span class="t" style="left:651.5px;top:972.5px;font-size:17.5px;line-height:26px;color:#262626;transform-origin:0 50%;transform:scaleX(1.016);">20日騰落上位50</span>
<div class="b" style="left:794px;top:980px;width:1px;height:19px;background:#b0b0b0;"></div>
<div class="b" style="left:797px;top:978px;width:174px;height:22px;background:#ed7d31;"></div>
<span class="t" style="left:808.5px;top:972.5px;font-size:17.5px;line-height:26px;color:#262626;transform-origin:0 50%;transform:scaleX(0.8988);">日別と株価による診断</span>
<div class="b" style="left:974px;top:976px;width:112px;height:24px;background:linear-gradient(#fff 0%,#fff 35%,#f8cfb4 100%);border-left:1px solid #b0b0b0;border-right:1px solid #b0b0b0;box-sizing:border-box"></div>
<div class="b" style="left:974px;top:998px;width:112px;height:2px;background:#217346;"></div>
<span class="t" style="left:987.5px;top:972.5px;font-size:17.5px;line-height:26px;color:#217346;transform-origin:0 50%;transform:scaleX(0.9043);">累計&nbsp; データ</span>
<span class="t" style="left:1100px;top:972.5px;font-size:17.5px;line-height:26px;color:#444;transform-origin:0 50%;transform:scaleX(0.8409);">トレン</span>
<span class="t" style="left:1146px;top:973.0px;font-size:16px;line-height:24px;color:#217346;font-weight:bold;transform-origin:0 50%;transform:scaleX(1.077);">...</span>
<svg class="b" style="left:1171px;top:980px;" width="20" height="20" viewBox="0 0 20 20"><circle cx="10" cy="10" r="9" fill="none" stroke="#777" stroke-width="1.200"/><path d="M10 5 V15 M5 10 H15" stroke="#777" stroke-width="1.400"/></svg>
<div class="b" style="left:1207px;top:984px;width:2px;height:2px;background:#a0a0a0;"></div>
<div class="b" style="left:1207px;top:989px;width:2px;height:2px;background:#a0a0a0;"></div>
<div class="b" style="left:1207px;top:994px;width:2px;height:2px;background:#a0a0a0;"></div>
<div class="b" style="left:1245px;top:979px;width:631px;height:21px;background:#d9d9d9;"></div>
<div class="b" style="left:1225px;top:980px;width:19px;height:19px;background:#fff;border:1px solid #c6c6c6;box-sizing:border-box;"></div>
<svg class="b" style="left:1230px;top:985px;" width="8" height="10" viewBox="0 0 8 10"><path d="M7 0.500 V9.500 L1.500 5 Z" fill="#666"/></svg>
<div class="b" style="left:1251px;top:980px;width:23px;height:19px;background:#fff;border:1px solid #c6c6c6;box-sizing:border-box;"></div>
<div class="b" style="left:1876px;top:980px;width:19px;height:19px;background:#fff;border:1px solid #c6c6c6;box-sizing:border-box;"></div>
<svg class="b" style="left:1882px;top:985px;" width="8" height="10" viewBox="0 0 8 10"><path d="M1 0.500 V9.500 L6.500 5 Z" fill="#666"/></svg>
<div class="b" style="left:0px;top:1004px;width:1920px;height:26px;background:#f3f3f3;"></div>
<span class="t" style="left:9px;top:1007.0px;font-size:15px;line-height:22px;color:#262626;transform-origin:0 50%;transform:scaleX(0.9917);">準備完了</span>
<div class="b" style="left:1538px;top:1004px;width:50px;height:26px;background:#c6c6c6;"></div>
<svg class="b" style="left:1555px;top:1009px;" width="17" height="16" viewBox="0 0 17 16"><g fill="none" stroke="#666" stroke-width="1.100"><rect x="0.500" y="0.500" width="15" height="15"/><path d="M0.500 5.500 H15.500 M.5 10.500 H15.500 M5.500 .5 V15.500 M10.500 .5 V15.500"/></g></svg>
<svg class="b" style="left:1604px;top:1009px;" width="18" height="16" viewBox="0 0 18 16"><g fill="none" stroke="#666" stroke-width="1.100"><rect x="0.500" y="0.500" width="16" height="14"/><rect x="4.500" y="3.500" width="8" height="8"/><path d="M6 5.500 H11 M6 7.500 H11 M6 9.500 H11"/></g></svg>
<svg class="b" style="left:1654px;top:1009px;" width="18" height="16" viewBox="0 0 18 16"><g fill="none" stroke="#666" stroke-width="1.100"><path d="M0.500 .5 H16.500 V14.500 H.5 Z M4.500 .5 V8.500 H10.500 V.5 M.5 8.500 H4.500"/></g></svg>
<div class="b" style="left:1695px;top:1016.5px;width:10px;height:1.2px;background:#555;"></div>
<div class="b" style="left:1711px;top:1017px;width:125px;height:1px;background:#a6a6a6;"></div>
<div class="b" style="left:1773px;top:1013px;width:1px;height:9px;background:#a6a6a6;"></div>
<div class="b" style="left:1751px;top:1009px;width:6px;height:16px;background:#666;"></div>
<div class="b" style="left:1842px;top:1016.5px;width:11px;height:1.2px;background:#555;"></div>
<div class="b" style="left:1846.9px;top:1011.5px;width:1.2px;height:11px;background:#555;"></div>
<span class="t" style="left:1869px;top:1006.0px;font-size:15.5px;line-height:23px;color:#444;transform-origin:0 50%;transform:scaleX(1);">70%</span>
<div class="b" style="left:0px;top:1030px;width:1920px;height:50px;background:linear-gradient(90deg,#c5ddd6 0%,#cfe1d0 3%,#e8e8c0 23%,#efeab8 27%,#efebb8 31%,#ebeabd 36%,#e0e9c8 41%,#d6e8d3 46%,#cfe7d9 51%,#d4e8d4 55%,#cbe6de 61%,#d0e7d8 64%,#dce9cc 66%,#e6eabd 71%,#efeaa8 74%,#f3eaa0 76%,#eeeaa8 78.5%,#e6eab4 81%,#e0e9be 83%,#ecebad 85.5%,#f0eca8 87.5%,#e6eabc 90%,#d3e7d3 93%,#c8e4e0 96%,#c4e2e4 100%)"></div>
<svg class="b" style="left:20px;top:1045px;" width="21" height="21" viewBox="0 0 21 21"><path d="M0 3 L8.500 1.800 V9.800 H0 Z M9.800 1.600 L21 0 V9.800 H9.800 Z M0 11 H8.500 V19.200 L0 18 Z M9.800 11 H21 V21 L9.800 19.400 Z" fill="#000"/></svg>
<div class="b" style="left:61px;top:1030px;width:428px;height:50px;background:#fff;border-top:1px solid #d4d4d4;box-sizing:border-box"></div>
<svg class="b" style="left:75px;top:1045px;" width="21" height="21" viewBox="0 0 21 21"><circle cx="12.500" cy="8" r="6.500" fill="none" stroke="#222" stroke-width="1.500"/><path d="M8 12.500 L1 19.500" stroke="#222" stroke-width="1.600"/></svg>
<span class="t" style="left:110px;top:1042.0px;font-size:17.5px;line-height:26px;color:#333;transform-origin:0 50%;transform:scaleX(0.9527);">ここに入力して検索</span>
<svg class="b" style="left:510px;top:1045px;" width="20" height="20" viewBox="0 0 20 20"><circle cx="10" cy="10" r="7.800" fill="none" stroke="#111" stroke-width="2.600"/></svg>
<svg class="b" style="left:569px;top:1045px;" width="22" height="20" viewBox="0 0 22 20"><g fill="none" stroke="#111" stroke-width="1.300"><path d="M1 0 V3 M1 16.500 V20 M13.500 0 V3 M13.500 16.500 V20 M1 3 H13.500 M1 16.500 H13.500"/><rect x="1.500" y="6" width="11.500" height="8"/><path d="M19.500 0 V4.500 M19.500 10 V20"/></g><rect x="18" y="5.500" width="3" height="3" fill="#111"/></svg>
<svg class="b" style="left:629px;top:1042px;" width="30" height="26" viewBox="0 0 30 26"><path d="M1 2 H10 L12.500 5 H27 V22 H1 Z" fill="#e8a923"/><path d="M1 7 H28 V23 H1 Z" fill="#ffd766"/><path d="M7 23 V14 H22 V23 H18.500 V17.500 H10.500 V23 Z" fill="#2a8fe0"/></svg>
<svg class="b" style="left:691px;top:1039px;" width="30" height="31" viewBox="0 0 30 31"><path d="M9 9 V5.500 A6 4.500 0 0 1 21 5.500 V9" fill="none" stroke="#222" stroke-width="2"/><path d="M1.500 8.500 H28.500 V29.500 H1.500 Z" fill="#2b2b2b"/><rect x="9" y="13" width="5.500" height="5.500" fill="#f25022"/><rect x="15.500" y="13" width="5.500" height="5.500" fill="#7fba00"/><rect x="9" y="19.500" width="5.500" height="5.500" fill="#00a4ef"/><rect x="15.500" y="19.500" width="5.500" height="5.500" fill="#ffb900"/></svg>
<svg class="b" style="left:752px;top:1040px;" width="32" height="30" viewBox="0 0 32 30"><path d="M1 11 L16 1 L31 11 V28 H1 Z" fill="#1169c4"/><path d="M4 8 H28 V20 H4 Z" fill="#fff"/><path d="M1 11 L16 20.500 L31 11 V28 H1 Z" fill="#2b9be8"/><path d="M1 28 L16 20.500 L31 28 Z" fill="#1f86d8"/></svg>
<svg class="b" style="left:815px;top:1040px;" width="30" height="30" viewBox="0 0 30 30"><rect width="30" height="30" fill="#f4511e"/><circle cx="15" cy="14" r="10.500" fill="#fff"/><circle cx="15" cy="12" r="5" fill="#f4511e"/><path d="M6.500 26 C7.500 19.500 22.500 19.500 23.500 26 Z" fill="#f4511e"/></svg>
<svg class="b" style="left:879px;top:1041px;" width="27" height="27" viewBox="0 0 27 27"><rect width="27" height="27" rx="3" fill="#2a4fe0"/><text x="13.500" y="16" font-size="17" fill="#fff" text-anchor="middle" font-family="Liberation Sans" font-weight="bold">@</text><text x="13.500" y="24.500" font-size="6.500" fill="#fff" text-anchor="middle" font-family="Liberation Sans">menu</text></svg>
<svg class="b" style="left:938px;top:1039px;" width="32" height="32" viewBox="0 0 32 32"><circle cx="16" cy="16" r="15" fill="#1b9de2"/><path d="M16 1 A15 15 0 0 1 31 15 C27 10 17 9 13.500 16 C11 22 15 28 22 29.500 A15 15 0 0 1 1.500 19 C2 9 9 2 16 1 Z" fill="#0c59a4"/><path d="M16 1 A15 15 0 0 1 31 15 C30 20 26 22 21.500 21 C24 18 22 13 17 12.500 C10 12 5 17 4 22 C0 12 6 2 16 1 Z" fill="#35c1f1"/><path d="M22 2.500 A15 15 0 0 1 31 15 C30 19 27 21 24 21 C28 14 26 7 22 2.500 Z" fill="#6fd64a" opacity=".85"/></svg>
<div class="b" style="left:929.5px;top:1077px;width:50px;height:3px;background:#0a74da;"></div>
<div class="b" style="left:986px;top:1030px;width:61px;height:50px;background:rgba(255,255,255,.62);"></div>
<svg class="b" style="left:1000px;top:1041px;" width="31" height="28" viewBox="0 0 31 28"><rect x="8" y="0" width="23" height="28" rx="2" fill="#21a366"/><path d="M8 0 H19.500 V7 H8 Z" fill="#21a366"/><rect x="19.500" y="0" width="11.500" height="7" fill="#33c481"/><rect x="8" y="7" width="11.500" height="7" fill="#107c41"/><rect x="19.500" y="7" width="11.500" height="7" fill="#21a366"/><rect x="8" y="14" width="11.500" height="7" fill="#185c37"/><rect x="19.500" y="14" width="11.500" height="7" fill="#107c41"/><rect x="8" y="21" width="23" height="7" fill="#185c37"/><rect x="0" y="6" width="16" height="16" rx="1.500" fill="#107c41"/><text x="8" y="18.500" font-size="12" fill="#fff" text-anchor="middle" font-family="Liberation Sans" font-weight="bold">X</text></svg>
<div class="b" style="left:986px;top:1077px;width:61px;height:3px;background:#0a74da;"></div>
<svg class="b" style="left:1590px;top:1049px;" width="19" height="12" viewBox="0 0 19 12"><path d="M1.500 10.500 L9.500 2 L17.500 10.500" fill="none" stroke="#111" stroke-width="1.500"/></svg>
<svg class="b" style="left:1618px;top:1046px;" width="23" height="16" viewBox="0 0 23 16"><path d="M6 15 A5 5 0 0 1 5.500 5.500 A6.500 6.500 0 0 1 17.500 6.500 A4.500 4.500 0 0 1 18 15 Z" fill="#bdbdbd" stroke="#333" stroke-width="1.200"/><path d="M2 12 C6 8 12 7 17.500 6.500" stroke="#777" fill="none"/></svg>
<svg class="b" style="left:1648px;top:1047px;" width="23" height="15" viewBox="0 0 23 15"><rect x="5.500" y="3" width="15" height="9.500" fill="#111"/><rect x="20.500" y="5.500" width="2" height="4.500" fill="#111"/><path d="M3 0 V3 M1 3 H5 V6 H1 Z M3 6 V9 H5.500" fill="none" stroke="#111" stroke-width="1.200"/></svg>
<svg class="b" style="left:1681px;top:1045px;" width="20" height="19" viewBox="0 0 20 19"><g fill="none" stroke="#333" stroke-width="1.400"><path d="M1 17 A16 16 0 0 1 17 1" /><path d="M5.500 17.500 A11.500 11.500 0 0 1 17 6" opacity=".8"/><path d="M10 18 A7 7 0 0 1 17 11" opacity=".8"/></g><circle cx="15.500" cy="16.500" r="1.800" fill="#222"/></svg>
<svg class="b" style="left:1708px;top:1046px;" width="26" height="18" viewBox="0 0 26 18"><path d="M1 6.500 H4.500 L9.500 2 V16 L4.500 11.500 H1 Z" fill="none" stroke="#111" stroke-width="1.300"/><path d="M12 6.500 A3.500 3.500 0 0 1 12 11.500 M14.500 4 A7 7 0 0 1 14.500 14" fill="none" stroke="#111" stroke-width="1.200"/><path d="M17.500 1.500 A10.500 10.500 0 0 1 17.500 16.500" fill="none" stroke="#999" stroke-width="1.100"/></svg>
<span class="t" style="left:1740px;top:1037.0px;font-size:24px;line-height:36px;color:#111;transform-origin:0 50%;transform:scaleX(0.9375);">A</span>
<span class="t" style="left:1807.5px;top:1031.0px;font-size:15.5px;line-height:23px;color:#222;transform-origin:50% 50%;transform:translateX(-50%) scaleX(0.8718);">17:39</span>
<span class="t" style="left:1807.5px;top:1054.0px;font-size:15.5px;line-height:23px;color:#222;transform-origin:50% 50%;transform:translateX(-50%) scaleX(0.9487);">2021/05/31</span>
<svg class="b" style="left:1869px;top:1045px;" width="22" height="22" viewBox="0 0 22 22"><path d="M0 0 H20 V16 H9 L5.500 20 V16 H0 Z" fill="#111"/><path d="M4 4.500 H16 M4 8 H16 M4 11.500 H16" stroke="#e8e8c8" stroke-width="1.300"/></svg>
<div class="b" style="left:1878px;top:1054px;width:21px;height:21px;background:#d4d4d4;border:1.500px solid #555;box-sizing:border-box;border-radius:50%"></div>
<span class="t" style="left:1888.5px;top:1054.0px;font-size:14px;line-height:21px;color:#111;font-weight:bold;transform:translateX(-50%);">1</span>
<div class="b" style="left:1914px;top:1030px;width:1px;height:50px;background:#9ab;"></div>
</body></html>
